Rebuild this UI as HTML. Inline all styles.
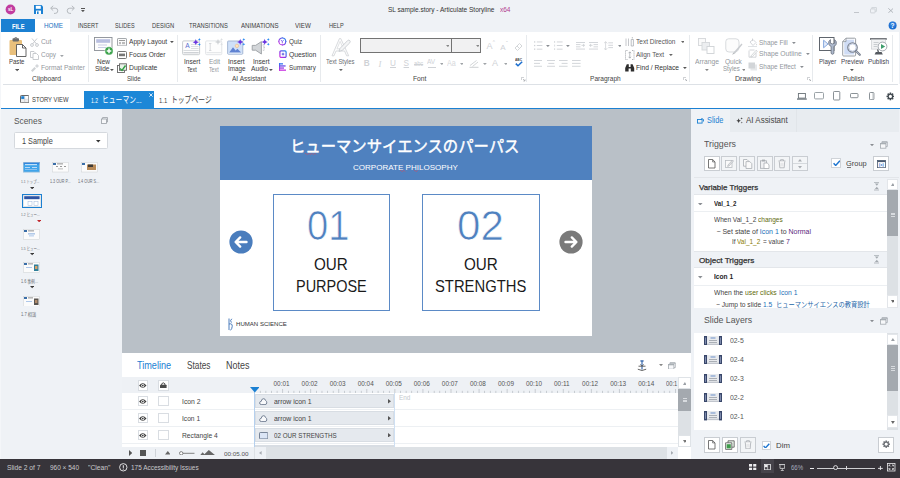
<!DOCTYPE html>
<html><head><meta charset="utf-8"><title>SL sample.story - Articulate Storyline</title>
<style>
html,body{margin:0;padding:0;}
body{width:900px;height:478px;overflow:hidden;position:relative;background:#eff2f6;font-family:"Liberation Sans","Noto Sans CJK JP",sans-serif;}
div,svg,span.t{position:absolute;}
span.t{white-space:nowrap;display:block;transform-origin:0 50%;}
</style></head><body>
<div style="left:0px;top:0px;width:900px;height:19px;background:#eff2f6;"></div>
<div style="left:0px;top:19px;width:900px;height:13px;background:#eff2f6;"></div>
<div style="left:1px;top:32px;width:898px;height:52px;background:#fff;"></div>
<div style="left:1px;top:84px;width:899px;height:1px;background:#fff;"></div>
<div style="left:3px;top:84px;width:895px;height:1px;background:#dde1e6;"></div>
<div style="left:1px;top:85px;width:899px;height:23px;background:#fff;"></div>
<div style="left:1px;top:108px;width:899px;height:1px;background:#1b80d2;"></div>
<div style="left:122px;top:109px;width:569px;height:244px;background:#b9c0c7;"></div>
<div style="left:0px;top:109px;width:122px;height:350px;background:#eff2f6;"></div>
<div style="left:0px;top:32px;width:1px;height:427px;background:#f4f6f9;"></div>
<div style="left:691px;top:109px;width:209px;height:350px;background:#eff2f6;"></div>
<div style="left:122px;top:353px;width:569px;height:106px;background:#fff;"></div>
<div style="left:0px;top:459px;width:900px;height:19px;background:#37343a;"></div>
<svg style="left:5px;top:4px;" width="11" height="11" viewBox="0 0 11 11"><circle cx="5.5" cy="5.5" r="4.9" fill="#c13c9f"/></svg>
<span class="t" style="left:7.92px;top:7.00px;font-size:4.6px;line-height:6px;color:#fff;font-weight:bold;">sL</span>
<svg style="left:34px;top:5px;" width="9" height="9" viewBox="0 0 9 9"><path d="M0 0H7.5L9 1.5V9H0Z" fill="#1b80d2"/><rect x="1.8" y="0.8" width="5" height="3" fill="#fff"/><rect x="2" y="5.6" width="5" height="3.4" fill="#fff"/><rect x="3" y="6.4" width="1.6" height="2.6" fill="#1b80d2"/></svg>
<svg style="left:50px;top:5px;" width="9" height="9" viewBox="0 0 9 9"><path d="M1 3.2H5.2A2.6 2.6 0 0 1 5.2 8.4H4" fill="none" stroke="#b5b9be" stroke-width="1"/><path d="M3.2 0.8L0.6 3.2L3.2 5.6" fill="none" stroke="#b5b9be" stroke-width="1"/></svg>
<svg style="left:66px;top:5px;" width="9" height="9" viewBox="0 0 9 9"><path d="M8 3.2H3.8A2.6 2.6 0 0 0 3.8 8.4H5" fill="none" stroke="#b5b9be" stroke-width="1"/><path d="M5.8 0.8L8.4 3.2L5.8 5.6" fill="none" stroke="#b5b9be" stroke-width="1"/></svg>
<div style="left:80.6px;top:7.8px;width:4.4px;height:0.8px;background:#555;"></div>
<svg style="left:80.9px;top:9.6px;" width="3.8" height="2.2" viewBox="0 0 3.8 2.2"><path d="M0 0H3.8L1.9 2.2Z" fill="#555"/></svg>
<span class="t" style="left:388.00px;top:5.40px;font-size:7.2px;line-height:10px;color:#333;transform:scaleX(0.9081);">SL sample.story -  Articulate Storyline</span>
<span class="t" style="left:500.00px;top:5.40px;font-size:7.2px;line-height:10px;color:#b23a8e;transform:scaleX(0.9046);">x64</span>
<div style="left:853.9px;top:12.1px;width:5px;height:0.9px;background:#c2c6cb;"></div>
<svg style="left:870px;top:7.4px;" width="7" height="6.6" viewBox="0 0 7 6.6"><rect x="0.5" y="1.9" width="4.6" height="4" rx="0.6" fill="none" stroke="#cdd1d6" stroke-width="0.9"/><path d="M1.8 1.8V0.6H6.4V4.4H5.2" fill="none" stroke="#cdd1d6" stroke-width="0.9"/></svg>
<svg style="left:887.6px;top:8.1px;" width="5.6" height="5.2" viewBox="0 0 5.6 5.2"><path d="M0.3 0.3L5.3 4.9M5.3 0.3L0.3 4.9" stroke="#a4aab0" stroke-width="0.8"/></svg>
<svg style="left:888px;top:20.5px;" width="9" height="9" viewBox="0 0 9 9"><circle cx="4.6" cy="4.5" r="4" fill="#1c6fd0"/><circle cx="4.6" cy="3.6" r="3" fill="#3f8de6" opacity="0.5"/></svg>
<span class="t" style="left:890.51px;top:21.10px;font-size:6.5px;line-height:9px;color:#fff;font-weight:bold;">?</span>
<div style="left:1px;top:19px;width:34px;height:13px;background:#1b80d2;"></div>
<span class="t" style="left:11.75px;top:21.70px;font-size:6.6px;line-height:9px;color:#fff;transform:scaleX(0.8742);font-weight:bold;">FILE</span>
<div style="left:35px;top:19px;width:34.7px;height:14px;background:#fff;"></div>
<span class="t" style="left:43.50px;top:21.20px;font-size:6.8px;line-height:10px;color:#1b6fc0;transform:scaleX(0.9314);">HOME</span>
<span class="t" style="left:78.40px;top:21.20px;font-size:6.8px;line-height:10px;color:#3c3c3c;transform:scaleX(0.8262);">INSERT</span>
<span class="t" style="left:114.80px;top:21.20px;font-size:6.8px;line-height:10px;color:#3c3c3c;transform:scaleX(0.8104);">SLIDES</span>
<span class="t" style="left:151.80px;top:21.20px;font-size:6.8px;line-height:10px;color:#3c3c3c;transform:scaleX(0.8516);">DESIGN</span>
<span class="t" style="left:188.70px;top:21.20px;font-size:6.8px;line-height:10px;color:#3c3c3c;transform:scaleX(0.8488);">TRANSITIONS</span>
<span class="t" style="left:241.30px;top:21.20px;font-size:6.8px;line-height:10px;color:#3c3c3c;transform:scaleX(0.8981);">ANIMATIONS</span>
<span class="t" style="left:295.40px;top:21.20px;font-size:6.8px;line-height:10px;color:#3c3c3c;transform:scaleX(0.9092);">VIEW</span>
<span class="t" style="left:329.30px;top:21.20px;font-size:6.8px;line-height:10px;color:#3c3c3c;transform:scaleX(0.8276);">HELP</span>
<div style="left:88px;top:35px;width:1px;height:47px;background:#e7eaed;"></div>
<div style="left:177px;top:35px;width:1px;height:47px;background:#e7eaed;"></div>
<div style="left:319.5px;top:35px;width:1px;height:47px;background:#e7eaed;"></div>
<div style="left:526px;top:35px;width:1px;height:47px;background:#e7eaed;"></div>
<div style="left:689px;top:35px;width:1px;height:47px;background:#e7eaed;"></div>
<div style="left:812px;top:35px;width:1px;height:47px;background:#e7eaed;"></div>
<div style="left:892px;top:35px;width:1px;height:47px;background:#e7eaed;"></div>
<span class="t" style="left:32.00px;top:74.00px;font-size:7px;line-height:10px;color:#444;transform:scaleX(0.9678);">Clipboard</span>
<span class="t" style="left:127.00px;top:74.00px;font-size:7px;line-height:10px;color:#444;transform:scaleX(0.8800);">Slide</span>
<span class="t" style="left:232.00px;top:74.00px;font-size:7px;line-height:10px;color:#444;transform:scaleX(0.9334);">AI Assistant</span>
<span class="t" style="left:413.40px;top:74.00px;font-size:7px;line-height:10px;color:#444;transform:scaleX(0.9565);">Font</span>
<span class="t" style="left:589.70px;top:74.00px;font-size:7px;line-height:10px;color:#444;transform:scaleX(0.9391);">Paragraph</span>
<span class="t" style="left:735.30px;top:74.00px;font-size:7px;line-height:10px;color:#444;transform:scaleX(1.0086);">Drawing</span>
<span class="t" style="left:842.80px;top:74.00px;font-size:7px;line-height:10px;color:#444;transform:scaleX(0.9320);">Publish</span>
<svg style="left:9px;top:37px;" width="18" height="20" viewBox="0 0 18 20"><rect x="0.5" y="3" width="12.5" height="15" rx="1" fill="#e9c07c"/>
<rect x="3.5" y="1.2" width="6.5" height="3.2" rx="0.8" fill="#6b6b6b"/><circle cx="6.8" cy="1.6" r="1.2" fill="none" stroke="#6b6b6b" stroke-width="0.8"/>
<path d="M7.5 7.5H13.5L17 11V19.5H7.5Z" fill="#fff" stroke="#555" stroke-width="0.9"/><path d="M13.5 7.5V11H17" fill="none" stroke="#555" stroke-width="0.9"/></svg>
<span class="t" style="left:9.00px;top:56.90px;font-size:7px;line-height:10px;color:#3a3a3a;transform:scaleX(0.8603);">Paste</span>
<svg style="left:14.84px;top:69.42px;" width="4.32" height="2.3760000000000003" viewBox="0 0 4.32 2.3760000000000003"><path d="M0 0H4.32L2.16 2.3760000000000003Z" fill="#555"/></svg>
<svg style="left:30px;top:37.5px;" width="9" height="9" viewBox="0 0 9 9"><path d="M2 0.5L6.5 6M7 0.5L2.5 6" stroke="#c2c5c9" stroke-width="0.9" fill="none"/><circle cx="2" cy="7" r="1.4" fill="none" stroke="#c2c5c9" stroke-width="0.9"/><circle cx="7" cy="7" r="1.4" fill="none" stroke="#c2c5c9" stroke-width="0.9"/></svg>
<span class="t" style="left:41.00px;top:37.40px;font-size:7px;line-height:10px;color:#92979d;transform:scaleX(0.9638);">Cut</span>
<svg style="left:30px;top:50.5px;" width="9" height="9" viewBox="0 0 9 9"><path d="M0.5 0.5H4L5.5 2V6.5H0.5Z" fill="#fff" stroke="#c2c5c9" stroke-width="0.9"/><path d="M3 2.5H6.5L8.5 4.5V8.5H3Z" fill="#fff" stroke="#c2c5c9" stroke-width="0.9"/></svg>
<span class="t" style="left:41.00px;top:50.40px;font-size:7px;line-height:10px;color:#92979d;transform:scaleX(0.9178);">Copy</span>
<svg style="left:60.08px;top:54.54px;" width="3.84" height="2.112" viewBox="0 0 3.84 2.112"><path d="M0 0H3.84L1.92 2.112Z" fill="#a0a4a8"/></svg>
<svg style="left:30px;top:63px;" width="9" height="9" viewBox="0 0 9 9"><path d="M1 7.5L4.5 4L6 5.5L2.5 9Z" fill="#cfd2d5"/><path d="M5 3L7 1L9 3L7 5Z" fill="#d5d8db"/></svg>
<span class="t" style="left:41.00px;top:62.70px;font-size:7px;line-height:10px;color:#92979d;transform:scaleX(0.9504);">Format Painter</span>
<svg style="left:94px;top:37px;" width="20" height="18" viewBox="0 0 20 18"><rect x="0.5" y="0.5" width="17.5" height="13" fill="#fdfdfd" stroke="#8a8f96" stroke-width="0.9"/>
<rect x="2.2" y="2.2" width="14" height="3.6" fill="#b9bfe0"/><rect x="4" y="7.5" width="9" height="1" fill="#c9cde6"/><rect x="4" y="10" width="9" height="1" fill="#c9cde6"/>
<circle cx="15" cy="13.9" r="4.1" fill="#3aa24a" stroke="#fff" stroke-width="0.5"/><path d="M12.7 13.9H17.3M15 11.6V16.2" stroke="#fff" stroke-width="1.5"/></svg>
<span class="t" style="left:97.45px;top:57.20px;font-size:7.2px;line-height:10px;color:#3a3a3a;transform:scaleX(0.8957);">New</span>
<span class="t" style="left:95.20px;top:64.20px;font-size:7.2px;line-height:10px;color:#3a3a3a;transform:scaleX(0.9058);">Slide</span>
<svg style="left:110.3px;top:69.35px;" width="3.8" height="2.09" viewBox="0 0 3.8 2.09"><path d="M0 0H3.8L1.9 2.09Z" fill="#555"/></svg>
<svg style="left:117px;top:37.6px;" width="10" height="8.4" viewBox="0 0 10 8.4"><rect x="0.5" y="0.5" width="9" height="7.4" rx="0.6" fill="#fbfbfb" stroke="#9a9ea3" stroke-width="0.9"/><rect x="2" y="2" width="6" height="1" fill="#999"/><rect x="2" y="4" width="2" height="2.2" fill="#bbb"/><rect x="5" y="4" width="3" height="2.2" fill="#bbb"/></svg>
<span class="t" style="left:128.60px;top:36.90px;font-size:7px;line-height:10px;color:#3a3a3a;transform:scaleX(0.9438);">Apply Layout</span>
<svg style="left:170.48000000000002px;top:41.04px;" width="3.84" height="2.112" viewBox="0 0 3.84 2.112"><path d="M0 0H3.84L1.92 2.112Z" fill="#555"/></svg>
<svg style="left:117px;top:50.5px;" width="10" height="8" viewBox="0 0 10 8"><rect x="0.5" y="0.5" width="9" height="7" rx="1" fill="#fff" stroke="#666" stroke-width="0.9"/><rect x="2" y="2.6" width="6" height="2.6" fill="#777"/></svg>
<span class="t" style="left:128.60px;top:49.70px;font-size:7px;line-height:10px;color:#3a3a3a;transform:scaleX(0.9357);">Focus Order</span>
<svg style="left:117px;top:62.5px;" width="10" height="10" viewBox="0 0 10 10"><rect x="0.5" y="2.5" width="7" height="7" fill="#fff" stroke="#666" stroke-width="0.9"/><rect x="2.5" y="0.8" width="7" height="6.5" fill="#e8f2e8" stroke="#666" stroke-width="0.9"/><path d="M3 5.5L5 7.5L8.5 2.5" stroke="#2f9e44" stroke-width="1.4" fill="none"/></svg>
<span class="t" style="left:128.60px;top:62.70px;font-size:7px;line-height:10px;color:#3a3a3a;transform:scaleX(0.9731);">Duplicate</span>
<svg style="left:182px;top:37px;" width="22" height="19" viewBox="0 0 22 19"><rect x="0.6" y="3.9" width="17" height="13.8" rx="1.2" fill="#fdfdfd" stroke="#c3c7cb" stroke-width="0.9"/><rect x="1.5" y="13" width="15.2" height="1" fill="#d9dcdf"/><rect x="1.5" y="15" width="15.2" height="1.4" fill="#cfd2d6"/><rect x="9" y="7.2" width="7.5" height="0.8" fill="#d5d8db"/><rect x="9" y="9.2" width="7.5" height="0.8" fill="#d5d8db"/><rect x="9" y="11.2" width="7.5" height="0.8" fill="#d5d8db"/><path transform="translate(13.8 5.2) scale(1.05)" d="M0 -3C0.45 -1 1 -0.45 3 0C1 0.45 0.45 1 0 3C-0.45 1 -1 0.45 -3 0C-1 -0.45 -0.45 -1 0 -3Z" fill="#6a35e0"/><path transform="translate(17.400000000000002 2.6) scale(0.5)" d="M0 -3C0.45 -1 1 -0.45 3 0C1 0.45 0.45 1 0 3C-0.45 1 -1 0.45 -3 0C-1 -0.45 -0.45 -1 0 -3Z" fill="#2a8af0"/><path transform="translate(17.400000000000002 7.4) scale(0.5)" d="M0 -3C0.45 -1 1 -0.45 3 0C1 0.45 0.45 1 0 3C-0.45 1 -1 0.45 -3 0C-1 -0.45 -0.45 -1 0 -3Z" fill="#2a8af0"/></svg>
<span class="t" style="left:185.20px;top:41.30px;font-size:6.6px;line-height:9px;color:#5a6fd0;">A</span>
<span class="t" style="left:183.60px;top:56.90px;font-size:7px;line-height:10px;color:#3a3a3a;transform:scaleX(0.9310);">Insert</span>
<span class="t" style="left:186.90px;top:64.50px;font-size:6.7px;line-height:9px;color:#3a3a3a;transform:scaleX(0.7829);">Text</span>
<svg style="left:205px;top:37px;" width="22" height="19" viewBox="0 0 22 19"><rect x="0.6" y="3.9" width="16.2" height="13.8" rx="1.2" fill="#fdfdfd" stroke="#dfe2e5" stroke-width="0.9"/><rect x="1.5" y="15" width="14.4" height="1.2" fill="#e6e8ea"/><path d="M5.2 6.5V13.5M4 6.5H6.4M4 13.5H6.4" stroke="#cfd2d5" stroke-width="0.8" fill="none"/><path transform="translate(13 5) scale(1.05)" d="M0 -3C0.45 -1 1 -0.45 3 0C1 0.45 0.45 1 0 3C-0.45 1 -1 0.45 -3 0C-1 -0.45 -0.45 -1 0 -3Z" fill="#d0d3d6"/><path transform="translate(16.6 2.4) scale(0.5)" d="M0 -3C0.45 -1 1 -0.45 3 0C1 0.45 0.45 1 0 3C-0.45 1 -1 0.45 -3 0C-1 -0.45 -0.45 -1 0 -3Z" fill="#dcdfe2"/><path transform="translate(16.6 7.2) scale(0.5)" d="M0 -3C0.45 -1 1 -0.45 3 0C1 0.45 0.45 1 0 3C-0.45 1 -1 0.45 -3 0C-1 -0.45 -0.45 -1 0 -3Z" fill="#dcdfe2"/></svg>
<span class="t" style="left:208.90px;top:56.90px;font-size:7px;line-height:10px;color:#92979d;transform:scaleX(0.9201);">Edit</span>
<span class="t" style="left:209.10px;top:64.50px;font-size:6.7px;line-height:9px;color:#92979d;transform:scaleX(0.7829);">Text</span>
<svg style="left:227px;top:37px;" width="22" height="19" viewBox="0 0 22 19"><rect x="0.6" y="4" width="15.2" height="13.2" rx="0.8" fill="#cfe0f8" stroke="#9fb2d0" stroke-width="0.9"/><path d="M2 15.8L6 10.2L8.6 13.6L10.4 11.8L14.4 15.8Z" fill="#5f82d2"/><circle cx="9.9" cy="8.9" r="1.7" fill="#fbe3c0" stroke="#f0b070" stroke-width="0.5"/><rect x="1.4" y="15.6" width="13.6" height="1" fill="#e8eef8"/><path transform="translate(13.2 5) scale(1.05)" d="M0 -3C0.45 -1 1 -0.45 3 0C1 0.45 0.45 1 0 3C-0.45 1 -1 0.45 -3 0C-1 -0.45 -0.45 -1 0 -3Z" fill="#6a35e0"/><path transform="translate(16.8 2.4) scale(0.5)" d="M0 -3C0.45 -1 1 -0.45 3 0C1 0.45 0.45 1 0 3C-0.45 1 -1 0.45 -3 0C-1 -0.45 -0.45 -1 0 -3Z" fill="#2a8af0"/><path transform="translate(16.8 7.2) scale(0.5)" d="M0 -3C0.45 -1 1 -0.45 3 0C1 0.45 0.45 1 0 3C-0.45 1 -1 0.45 -3 0C-1 -0.45 -0.45 -1 0 -3Z" fill="#2a8af0"/></svg>
<span class="t" style="left:228.00px;top:56.90px;font-size:7px;line-height:10px;color:#3a3a3a;transform:scaleX(0.9538);">Insert</span>
<span class="t" style="left:227.70px;top:64.20px;font-size:7px;line-height:10px;color:#3a3a3a;transform:scaleX(0.8994);">Image</span>
<svg style="left:251px;top:37px;" width="22" height="19" viewBox="0 0 22 19"><path d="M1.2 8.4H4.6L10.4 4.6V17L4.6 13.2H1.2Z" fill="#d3d6d9" stroke="#9a9ea3" stroke-width="0.9"/><path d="M12 7.6Q14.4 10.8 12 14" fill="none" stroke="#c5c8cc" stroke-width="1.6" stroke-dasharray="0.8 0.6"/><path transform="translate(13.7 5) scale(1.05)" d="M0 -3C0.45 -1 1 -0.45 3 0C1 0.45 0.45 1 0 3C-0.45 1 -1 0.45 -3 0C-1 -0.45 -0.45 -1 0 -3Z" fill="#6a35e0"/><path transform="translate(17.3 2.4) scale(0.5)" d="M0 -3C0.45 -1 1 -0.45 3 0C1 0.45 0.45 1 0 3C-0.45 1 -1 0.45 -3 0C-1 -0.45 -0.45 -1 0 -3Z" fill="#2a8af0"/><path transform="translate(17.3 7.2) scale(0.5)" d="M0 -3C0.45 -1 1 -0.45 3 0C1 0.45 0.45 1 0 3C-0.45 1 -1 0.45 -3 0C-1 -0.45 -0.45 -1 0 -3Z" fill="#2a8af0"/></svg>
<span class="t" style="left:252.70px;top:56.90px;font-size:7px;line-height:10px;color:#3a3a3a;transform:scaleX(0.9481);">Insert</span>
<span class="t" style="left:250.80px;top:64.00px;font-size:7px;line-height:10px;color:#3a3a3a;transform:scaleX(0.9494);">Audio</span>
<svg style="left:268.90000000000003px;top:69.25px;" width="3.8" height="2.09" viewBox="0 0 3.8 2.09"><path d="M0 0H3.8L1.9 2.09Z" fill="#555"/></svg>
<svg width="0" height="0" style="left:0;top:0"><defs><linearGradient id="gp" x1="1" y1="0" x2="0" y2="1"><stop offset="0" stop-color="#1e8cf0"/><stop offset="0.55" stop-color="#7a3fe6"/><stop offset="1" stop-color="#d32fe0"/></linearGradient><linearGradient id="gv" x1="0" y1="0" x2="0" y2="1"><stop offset="0" stop-color="#2a7cf0"/><stop offset="1" stop-color="#d32fe0"/></linearGradient></defs></svg>
<svg style="left:278px;top:37px;" width="9" height="9" viewBox="0 0 9 9"><circle cx="4.3" cy="4.4" r="3.4" fill="#fff" stroke="url(#gp)" stroke-width="1.1"/><path d="M2.8 2.8L4.3 4.6L5.8 2.8M4.3 4.6V6.4" stroke="url(#gp)" stroke-width="0.8" fill="none"/><path d="M4.3 0V0.8M4.3 8V8.8M0 4.4H0.7M7.9 4.4H8.6" stroke="url(#gp)" stroke-width="0.8"/></svg>
<span class="t" style="left:288.90px;top:37.00px;font-size:7px;line-height:10px;color:#3a3a3a;transform:scaleX(0.9101);">Quiz</span>
<svg style="left:278.5px;top:50.3px;" width="8" height="8.4" viewBox="0 0 8 8.4"><rect x="0.9" y="0.9" width="6.2" height="6.4" rx="1.1" fill="#fff" stroke="url(#gp)" stroke-width="1.2"/><path d="M2.7 4.1H5.3M4 2.8V5.4" stroke="#4a4fe0" stroke-width="0.9"/></svg>
<span class="t" style="left:288.90px;top:49.80px;font-size:7px;line-height:10px;color:#3a3a3a;transform:scaleX(0.9707);">Question</span>
<svg style="left:278.8px;top:63.2px;" width="8" height="8" viewBox="0 0 8 8"><rect x="0" y="0" width="1.1" height="7.8" fill="url(#gv)"/><rect x="0" y="0.2" width="4" height="1.3" fill="#3a78f0"/><rect x="0" y="2.3" width="6.6" height="1.3" fill="#6a4fe8"/><rect x="0" y="4.4" width="5" height="1.3" fill="#9a3fe4"/><rect x="0" y="6.5" width="7" height="1.3" fill="#c832e0"/></svg>
<span class="t" style="left:288.90px;top:62.80px;font-size:7px;line-height:10px;color:#3a3a3a;transform:scaleX(0.8948);">Summary</span>
<svg style="left:331px;top:37.5px;" width="22" height="19" viewBox="0 0 22 19"><path d="M1 17.8L8.4 0.6H9.8L17.7 17.8H15.6L13.6 13H5L3 17.8Z" fill="#fdfdfd" stroke="#cfd2d6" stroke-width="0.8"/><path d="M6 10.8H12.4L9.1 3.4Z" fill="#fff" stroke="#d5d8db" stroke-width="0.7"/><path d="M8 13.4L9 10.4L16.6 2.6Q17.8 1.6 18.8 2.6Q19.7 3.6 18.8 4.8L11.2 12.4Z" fill="#f4f5f6" stroke="#c3c7cb" stroke-width="0.8"/></svg>
<span class="t" style="left:326.10px;top:57.00px;font-size:7px;line-height:10px;color:#6a6e73;transform:scaleX(0.8376);">Text Styles</span>
<svg style="left:339.08px;top:69.34px;" width="3.84" height="2.112" viewBox="0 0 3.84 2.112"><path d="M0 0H3.84L1.92 2.112Z" fill="#666"/></svg>
<div style="left:360px;top:38.4px;width:91.6px;height:14.4px;background:#f1f1f2;border:1px solid #737373;box-sizing:border-box;"></div>
<div style="left:450.6px;top:38.4px;width:30.6px;height:14.4px;background:#f1f1f2;border:1px solid #737373;box-sizing:border-box;"></div>
<svg style="left:445.70000000000005px;top:44.849999999999994px;" width="3.8" height="2.09" viewBox="0 0 3.8 2.09"><path d="M0 0H3.8L1.9 2.09Z" fill="#888"/></svg>
<svg style="left:475.5px;top:44.849999999999994px;" width="3.8" height="2.09" viewBox="0 0 3.8 2.09"><path d="M0 0H3.8L1.9 2.09Z" fill="#888"/></svg>
<span class="t" style="left:363.74px;top:58.10px;font-size:8.2px;line-height:11px;color:#cfd2d6;font-weight:bold;">B</span>
<span class="t" style="left:378.51px;top:57.60px;font-size:8.6px;line-height:12px;color:#cfd2d6;font-style:italic;font-family:'Liberation Serif',serif;">I</span>
<span class="t" style="left:390.04px;top:58.10px;font-size:8.2px;line-height:11px;color:#cfd2d6;text-decoration:underline;">U</span>
<span class="t" style="left:403.57px;top:58.10px;font-size:8.2px;line-height:11px;color:#cfd2d6;text-decoration:underline;">S</span>
<span class="t" style="left:413.80px;top:58.80px;font-size:7px;line-height:10px;color:#cfd2d6;transform:scaleX(0.8151);text-decoration:line-through;">abc</span>
<span class="t" style="left:427.30px;top:57.40px;font-size:7.2px;line-height:10px;color:#cfd2d6;transform:scaleX(0.9059);">AV</span>
<div style="left:427.5px;top:66.6px;width:8.5px;height:0.8px;background:#cfd2d6;"></div>
<svg style="left:439.70000000000005px;top:62.55px;" width="3.8" height="2.09" viewBox="0 0 3.8 2.09"><path d="M0 0H3.8L1.9 2.09Z" fill="#a0a4a8"/></svg>
<span class="t" style="left:447.00px;top:57.40px;font-size:8.4px;line-height:12px;color:#d6d8db;transform:scaleX(0.8566);">Aa</span>
<svg style="left:459.70000000000005px;top:62.55px;" width="3.8" height="2.09" viewBox="0 0 3.8 2.09"><path d="M0 0H3.8L1.9 2.09Z" fill="#a0a4a8"/></svg>
<svg style="left:469px;top:58.5px;" width="10" height="9" viewBox="0 0 10 9"><path d="M1 6.5L7.5 1.5M3.5 7.5L9 3" stroke="#cdd0d3" stroke-width="0.9"/><path d="M0.5 8.3H9.5" stroke="#cdd0d3" stroke-width="1"/></svg>
<svg style="left:483.3px;top:62.55px;" width="3.8" height="2.09" viewBox="0 0 3.8 2.09"><path d="M0 0H3.8L1.9 2.09Z" fill="#a0a4a8"/></svg>
<span class="t" style="left:492.00px;top:56.70px;font-size:9px;line-height:13px;color:#cfd2d6;">A</span>
<svg style="left:503.6px;top:62.55px;" width="3.8" height="2.09" viewBox="0 0 3.8 2.09"><path d="M0 0H3.8L1.9 2.09Z" fill="#a0a4a8"/></svg>
<span class="t" style="left:514.80px;top:57.90px;font-size:3.6px;line-height:5px;color:#444;transform:scaleX(0.8976);font-weight:bold;">ABC</span>
<svg style="left:514.5px;top:61px;" width="8" height="6" viewBox="0 0 8 6"><path d="M0.8 2.6L3 4.8L7.2 0.8" fill="none" stroke="#1b6fd0" stroke-width="1.5"/></svg>
<span class="t" style="left:486.60px;top:40.10px;font-size:9px;line-height:13px;color:#cfd2d6;">A</span>
<span class="t" style="left:492.74px;top:39.80px;font-size:4.5px;line-height:6px;color:#cfd2d6;">^</span>
<span class="t" style="left:500.33px;top:41.50px;font-size:8px;line-height:11px;color:#cfd2d6;">A</span>
<span class="t" style="left:505.88px;top:39.20px;font-size:5.5px;line-height:8px;color:#cfd2d6;">ˇ</span>
<svg style="left:514px;top:41.5px;" width="9" height="9" viewBox="0 0 9 9"><path d="M1 6L5.5 1.5L8 4L3.5 8.5Z" fill="none" stroke="#cfd2d5" stroke-width="0.9"/><path d="M3 4L5.5 6.5" stroke="#cfd2d5" stroke-width="0.9"/></svg>
<svg style="left:521px;top:77px;" width="4.5" height="4.5" viewBox="0 0 4.5 4.5"><path d="M0.4 3V0.4H3" fill="none" stroke="#b5b8bc" stroke-width="0.7"/><path d="M2 2L4 4M4 2.3V4H2.3" fill="none" stroke="#a5a8ac" stroke-width="0.7"/></svg>
<svg style="left:533.6px;top:41px;" width="9" height="9" viewBox="0 0 9 9"><rect x="0" y="0.3" width="1.3" height="1.3" fill="#cfd2d6"/><rect x="2.8" y="0.5" width="5.6" height="0.9" fill="#cfd2d6"/><rect x="0" y="3.9" width="1.3" height="1.3" fill="#cfd2d6"/><rect x="2.8" y="4.1" width="5.6" height="0.9" fill="#cfd2d6"/><rect x="0" y="7.5" width="1.3" height="1.3" fill="#cfd2d6"/><rect x="2.8" y="7.7" width="5.6" height="0.9" fill="#cfd2d6"/></svg>
<svg style="left:546.0px;top:44.949999999999996px;" width="3.8" height="2.09" viewBox="0 0 3.8 2.09"><path d="M0 0H3.8L1.9 2.09Z" fill="#8a8e93"/></svg>
<svg style="left:553.5px;top:41px;" width="9" height="9" viewBox="0 0 9 9"><rect x="0.3" y="0.0" width="0.8" height="1.9" fill="#cfd2d6"/><rect x="2.8" y="0.5" width="5.8" height="0.9" fill="#cfd2d6"/><rect x="0.3" y="3.6" width="0.8" height="1.9" fill="#cfd2d6"/><rect x="2.8" y="4.1" width="5.8" height="0.9" fill="#cfd2d6"/><rect x="0.3" y="7.2" width="0.8" height="1.9" fill="#cfd2d6"/><rect x="2.8" y="7.7" width="5.8" height="0.9" fill="#cfd2d6"/></svg>
<svg style="left:566.1px;top:44.949999999999996px;" width="3.8" height="2.09" viewBox="0 0 3.8 2.09"><path d="M0 0H3.8L1.9 2.09Z" fill="#8a8e93"/></svg>
<svg style="left:575.9px;top:42px;" width="10" height="8" viewBox="0 0 10 8"><rect x="0" y="0.0" width="9" height="0.9" fill="#cfd2d6"/><rect x="0" y="2.2" width="4.5" height="0.9" fill="#cfd2d6"/><rect x="0" y="4.4" width="4.5" height="0.9" fill="#cfd2d6"/><rect x="0" y="6.6000000000000005" width="9" height="0.9" fill="#cfd2d6"/><path d="M5.5 3.3H9M7.6 1.9V4.8" stroke="#cfd2d6" stroke-width="0.9"/></svg>
<svg style="left:589.2px;top:42px;" width="10" height="8" viewBox="0 0 10 8"><rect x="0" y="0.0" width="9" height="0.9" fill="#cfd2d6"/><rect x="4.5" y="2.2" width="4.5" height="0.9" fill="#cfd2d6"/><rect x="4.5" y="4.4" width="4.5" height="0.9" fill="#cfd2d6"/><rect x="0" y="6.6000000000000005" width="9" height="0.9" fill="#cfd2d6"/><path d="M0 3.3H3.6M1.6 1.9V4.8" stroke="#cfd2d6" stroke-width="0.9"/></svg>
<svg style="left:604.3px;top:41px;" width="10" height="10" viewBox="0 0 10 10"><path d="M1.6 0.8V8.8M0 2.4L1.6 0.6L3.2 2.4M0 7.2L1.6 9L3.2 7.2" fill="none" stroke="#cfd2d6" stroke-width="0.8"/><rect x="4.3" y="1.4" width="4.7" height="0.9" fill="#cfd2d6"/><rect x="4.3" y="3.8" width="4.7" height="0.9" fill="#cfd2d6"/><rect x="4.3" y="6.199999999999999" width="4.7" height="0.9" fill="#cfd2d6"/></svg>
<svg style="left:617.6px;top:44.949999999999996px;" width="3.8" height="2.09" viewBox="0 0 3.8 2.09"><path d="M0 0H3.8L1.9 2.09Z" fill="#8a8e93"/></svg>
<svg style="left:533.6px;top:60px;" width="8.5" height="8.7" viewBox="0 0 8.5 8.7"><rect x="0" y="0.0" width="8.5" height="0.9" fill="#cfd2d6"/><rect x="0" y="2.9" width="6" height="0.9" fill="#cfd2d6"/><rect x="0" y="5.8" width="8.5" height="0.9" fill="#cfd2d6"/></svg>
<svg style="left:546.7px;top:60px;" width="8.6" height="9" viewBox="0 0 8.6 9"><rect x="0.0" y="0.0" width="8.6" height="0.9" fill="#cfd2d6"/><rect x="1.2999999999999998" y="2.9" width="6" height="0.9" fill="#cfd2d6"/><rect x="0.0" y="5.8" width="8.6" height="0.9" fill="#cfd2d6"/></svg>
<svg style="left:559.3px;top:60px;" width="8.6" height="8.7" viewBox="0 0 8.6 8.7"><rect x="0.0" y="0.0" width="8.6" height="0.9" fill="#cfd2d6"/><rect x="2.5999999999999996" y="2.9" width="6" height="0.9" fill="#cfd2d6"/><rect x="0.0" y="5.8" width="8.6" height="0.9" fill="#cfd2d6"/></svg>
<svg style="left:572.4px;top:60px;" width="8.6" height="8.7" viewBox="0 0 8.6 8.7"><rect x="0" y="0.0" width="8.6" height="0.9" fill="#cfd2d6"/><rect x="0" y="2.9" width="8.6" height="0.9" fill="#cfd2d6"/><rect x="0" y="5.8" width="8.6" height="0.9" fill="#cfd2d6"/></svg>
<svg style="left:625px;top:37px;" width="10" height="10" viewBox="0 0 10 10"><path d="M1 1.5V9M3.5 1.5V9" stroke="#bfc2c6" stroke-width="0.9"/><path d="M6.2 9V2.5H8.4V9Z" fill="none" stroke="#a9adb2" stroke-width="0.8"/><path d="M7.3 0V1.5" stroke="#a9adb2" stroke-width="0.8"/></svg>
<span class="t" style="left:636.00px;top:36.90px;font-size:7px;line-height:10px;color:#555;transform:scaleX(0.9309);">Text Direction</span>
<svg style="left:680.6px;top:41.05px;" width="3.8" height="2.09" viewBox="0 0 3.8 2.09"><path d="M0 0H3.8L1.9 2.09Z" fill="#666"/></svg>
<svg style="left:625px;top:49.5px;" width="10" height="10" viewBox="0 0 10 10"><path d="M2.5 0.5H0.5V9.5H2.5M7 0.5H9V9.5H7" fill="none" stroke="#9a9ea3" stroke-width="0.8" stroke-dasharray="1.2 0.8"/><path d="M4.8 2V8M3.6 3.2L4.8 1.8L6 3.2M3.6 6.8L4.8 8.2L6 6.8" fill="none" stroke="#9a9ea3" stroke-width="0.7"/></svg>
<span class="t" style="left:636.00px;top:49.70px;font-size:7px;line-height:10px;color:#555;transform:scaleX(0.9316);">Align Text</span>
<svg style="left:668.9px;top:53.849999999999994px;" width="3.8" height="2.09" viewBox="0 0 3.8 2.09"><path d="M0 0H3.8L1.9 2.09Z" fill="#666"/></svg>
<svg style="left:625px;top:62.5px;" width="10" height="9" viewBox="0 0 10 9"><path d="M1.8 1.2H3.8V4H5.6V1.2H7.6L9.2 5V8.4H5.8V5.6H3.6V8.4H0.2V5Z" fill="#2e2e2e"/></svg>
<span class="t" style="left:636.00px;top:62.70px;font-size:7px;line-height:10px;color:#333;transform:scaleX(0.9526);">Find / Replace</span>
<svg style="left:682.9px;top:66.85px;" width="3.8" height="2.09" viewBox="0 0 3.8 2.09"><path d="M0 0H3.8L1.9 2.09Z" fill="#555"/></svg>
<svg style="left:682.8px;top:76.7px;" width="4.5" height="4.5" viewBox="0 0 4.5 4.5"><path d="M0.4 3V0.4H3" fill="none" stroke="#b5b8bc" stroke-width="0.7"/><path d="M2 2L4 4M4 2.3V4H2.3" fill="none" stroke="#a5a8ac" stroke-width="0.7"/></svg>
<svg style="left:698px;top:38px;" width="17" height="16" viewBox="0 0 17 16"><rect x="0.5" y="0.5" width="7" height="7" fill="#fafafa" stroke="#d4d7da" stroke-width="0.9"/><rect x="4" y="4.5" width="7.5" height="7.5" fill="#eceef0" stroke="#d4d7da" stroke-width="0.9"/><rect x="9" y="8.5" width="7" height="7" fill="#fff" stroke="#cfd2d6" stroke-width="0.9"/></svg>
<span class="t" style="left:694.70px;top:56.90px;font-size:7px;line-height:10px;color:#92979d;transform:scaleX(0.9637);">Arrange</span>
<svg style="left:704.88px;top:69.34px;" width="3.84" height="2.112" viewBox="0 0 3.84 2.112"><path d="M0 0H3.84L1.92 2.112Z" fill="#888"/></svg>
<svg style="left:725px;top:38px;" width="18" height="18" viewBox="0 0 18 18"><path d="M3.5 0.8H11Q14 0.8 14 4V9Q14 14 9 14H4Q0.8 14 0.8 11V3.5Q0.8 0.8 3.5 0.8Z" fill="#fcfcfc" stroke="#d4d7da" stroke-width="0.9"/><path d="M8.5 14.5L16.5 5.5L17.5 6.5L10 15.5Z" fill="#c9ccd0"/><path d="M7 16.8L8.6 14.4L10 15.6Z" fill="#b5b8bc"/></svg>
<span class="t" style="left:724.50px;top:56.90px;font-size:7px;line-height:10px;color:#92979d;transform:scaleX(0.9388);">Quick</span>
<span class="t" style="left:723.40px;top:64.40px;font-size:7px;line-height:10px;color:#92979d;transform:scaleX(0.8813);">Styles</span>
<svg style="left:741.5px;top:69.25px;" width="3.8" height="2.09" viewBox="0 0 3.8 2.09"><path d="M0 0H3.8L1.9 2.09Z" fill="#888"/></svg>
<svg style="left:748px;top:37.5px;" width="10" height="9" viewBox="0 0 10 9"><path d="M2 4L5 1.5L8 4.5L5 7.5Z" fill="#fff" stroke="#c9ccd0" stroke-width="0.8"/><path d="M4.5 0.5V3" stroke="#c9ccd0" stroke-width="0.8"/><path d="M8.6 5.5Q9.6 7 8.6 7.6Q7.6 7 8.6 5.5Z" fill="#c9ccd0"/><rect x="0" y="8" width="9" height="0.9" fill="#dcdfe2"/></svg>
<span class="t" style="left:759.30px;top:37.50px;font-size:7px;line-height:10px;color:#92979d;transform:scaleX(0.9219);">Shape Fill</span>
<svg style="left:792.4px;top:41.65px;" width="3.8" height="2.09" viewBox="0 0 3.8 2.09"><path d="M0 0H3.8L1.9 2.09Z" fill="#8a8e93"/></svg>
<svg style="left:748px;top:49px;" width="10" height="9" viewBox="0 0 10 9"><path d="M1.5 1H6.5" stroke="#c9ccd0" stroke-width="0.8"/><path d="M1 1.5V8.2H8V4" fill="none" stroke="#c9ccd0" stroke-width="0.8"/><path d="M3.2 6.8L8.2 1.2L9.3 2.2L4.4 7.6L2.8 8Z" fill="#fff" stroke="#c2c5c9" stroke-width="0.7"/></svg>
<span class="t" style="left:759.30px;top:49.20px;font-size:7px;line-height:10px;color:#92979d;transform:scaleX(0.9623);">Shape Outline</span>
<svg style="left:806.4px;top:53.349999999999994px;" width="3.8" height="2.09" viewBox="0 0 3.8 2.09"><path d="M0 0H3.8L1.9 2.09Z" fill="#8a8e93"/></svg>
<svg style="left:748px;top:61.5px;" width="10" height="9" viewBox="0 0 10 9"><rect x="2.5" y="2.5" width="6.5" height="6" fill="#e6e8ea"/><rect x="0.5" y="0.5" width="6.5" height="6" fill="#d2d5d8"/></svg>
<span class="t" style="left:759.30px;top:61.60px;font-size:7px;line-height:10px;color:#92979d;transform:scaleX(0.9205);">Shape Effect</span>
<svg style="left:800.1px;top:65.75px;" width="3.8" height="2.09" viewBox="0 0 3.8 2.09"><path d="M0 0H3.8L1.9 2.09Z" fill="#8a8e93"/></svg>
<svg style="left:806.5px;top:76.7px;" width="4.5" height="4.5" viewBox="0 0 4.5 4.5"><path d="M0.4 3V0.4H3" fill="none" stroke="#b5b8bc" stroke-width="0.7"/><path d="M2 2L4 4M4 2.3V4H2.3" fill="none" stroke="#a5a8ac" stroke-width="0.7"/></svg>
<svg style="left:818px;top:36px;" width="22" height="20" viewBox="0 0 22 20"><rect x="1.5" y="1.5" width="14.5" height="13" fill="#fff" stroke="#5f656d" stroke-width="1"/><path d="M5.6 4.2L10 8L5.6 11.8Z" fill="#e4ecfa" stroke="#7b9fd9" stroke-width="0.9"/><path d="M12.4 3.6Q10 5.4 10.8 8.2Q11.4 9.8 13.1 10.4V17.4Q14.5 19.2 15.9 17.4V10.4Q17.6 9.8 18.2 8.2Q19 5.4 16.6 3.6V7.2Q14.5 8.6 12.4 7.2Z" fill="#aeb9cd" stroke="#68707d" stroke-width="0.8"/></svg>
<span class="t" style="left:819.00px;top:56.90px;font-size:7px;line-height:10px;color:#3f4450;transform:scaleX(0.8719);">Player</span>
<svg style="left:841px;top:36.5px;" width="21" height="21" viewBox="0 0 21 21"><path d="M1.7 4.6L5 1.2H13.6Q14.6 1.2 14.6 2.2V18Q14.6 19 13.6 19H2.7Q1.7 19 1.7 18Z" fill="#fdfdfd" stroke="#8d939b" stroke-width="0.9"/><path d="M3.2 5.2L5.6 2.8H13V17.4H3.2Z" fill="#cfdcf5"/><path d="M1.7 4.6H5V1.2" fill="none" stroke="#8d939b" stroke-width="0.8"/><circle cx="11.5" cy="10.5" r="4.7" fill="#fff" stroke="#7a8290" stroke-width="1.3"/><circle cx="11.5" cy="10.5" r="3.6" fill="none" stroke="#c0cbe2" stroke-width="0.9"/><path d="M15 14L18.8 17.8" stroke="#7a8290" stroke-width="2.2" stroke-linecap="round"/><path d="M15 14L18.6 17.6" stroke="#c5cede" stroke-width="0.7"/></svg>
<span class="t" style="left:841.20px;top:56.90px;font-size:7px;line-height:10px;color:#3f4450;transform:scaleX(0.9077);">Preview</span>
<svg style="left:850.1800000000001px;top:69.34px;" width="3.84" height="2.112" viewBox="0 0 3.84 2.112"><path d="M0 0H3.84L1.92 2.112Z" fill="#555"/></svg>
<svg style="left:869px;top:37px;" width="20" height="19" viewBox="0 0 20 19"><rect x="1" y="1.2" width="16.8" height="1.5" fill="#55595f"/><rect x="2.4" y="2.7" width="14" height="9.4" fill="#f1f2f3" stroke="#c5c8cc" stroke-width="0.6"/><rect x="4.6" y="5" width="5" height="0.8" fill="#c0c3c7"/><rect x="4.6" y="7" width="4" height="0.8" fill="#c0c3c7"/><rect x="4.6" y="9" width="3.4" height="0.8" fill="#c0c3c7"/><circle cx="13.5" cy="9.5" r="4.4" fill="#fff" stroke="#8d939b" stroke-width="0.8"/><path d="M12 7L16.2 9.5L12 12Z" fill="#3f9d6c"/><path d="M8.6 12.4L9.4 15.2" stroke="#55595f" stroke-width="1.3"/><path d="M5.6 17.5L6.8 15H12.6L13.8 17.5Z" fill="#55595f"/></svg>
<span class="t" style="left:867.80px;top:56.90px;font-size:7px;line-height:10px;color:#3f4450;transform:scaleX(0.9146);">Publish</span>
<svg style="left:19.8px;top:95px;" width="9.4" height="8.4" viewBox="0 0 9.4 8.4"><rect x="0.5" y="0.5" width="8.4" height="7.3" rx="0.8" fill="#fff" stroke="#555" stroke-width="0.9"/><rect x="1.2" y="1.2" width="3.2" height="2.8" fill="#1b80d2"/><path d="M4.7 1V7.4M1 4.3H8.4M1 6H8.4" stroke="#b5b9be" stroke-width="0.5"/></svg>
<span class="t" style="left:32.00px;top:95.40px;font-size:6.6px;line-height:9px;color:#3a3a3a;transform:scaleX(0.8881);">STORY VIEW</span>
<div style="left:84px;top:91px;width:70.3px;height:18px;background:#1c87d7;"></div>
<span class="t" style="left:90.80px;top:95.70px;font-size:6.4px;line-height:9px;color:#fff;transform:scaleX(0.7869);">1.2</span>
<span class="t" style="left:102.20px;top:93.70px;font-size:8.7px;line-height:12px;color:#fff;transform:scaleX(0.7823);">ヒューマン...</span>
<svg style="left:148.5px;top:93px;" width="4" height="4" viewBox="0 0 4 4"><path d="M0.4 0.4L3.6 3.6M3.6 0.4L0.4 3.6" stroke="#fff" stroke-width="0.8"/></svg>
<span class="t" style="left:158.80px;top:95.70px;font-size:6.6px;line-height:9px;color:#444;transform:scaleX(0.8938);">1.1</span>
<span class="t" style="left:170.90px;top:93.70px;font-size:8.7px;line-height:12px;color:#444;transform:scaleX(0.7836);">トップページ</span>
<svg style="left:796.5px;top:92.5px;" width="10" height="7" viewBox="0 0 10 7"><rect x="1.4" y="0.5" width="7" height="4.6" fill="#fff" stroke="#6b7378" stroke-width="0.9"/><rect x="0" y="5.4" width="9.8" height="1.3" fill="#6b7378"/></svg>
<svg style="left:814px;top:92.2px;" width="10" height="7.6" viewBox="0 0 10 7.6"><rect x="0.5" y="0.5" width="9" height="6.4" rx="1" fill="#fff" stroke="#8f979c" stroke-width="0.9"/></svg>
<svg style="left:833px;top:91.3px;" width="7.5" height="9.6" viewBox="0 0 7.5 9.6"><rect x="0.5" y="0.5" width="6.3" height="8.5" rx="0.8" fill="#fff" stroke="#7d858a" stroke-width="0.9"/></svg>
<svg style="left:850px;top:93.2px;" width="8.6" height="5.4" viewBox="0 0 8.6 5.4"><rect x="0.5" y="0.5" width="7.5" height="4.2" rx="0.8" fill="#fff" stroke="#7d858a" stroke-width="0.9"/></svg>
<svg style="left:869px;top:91.8px;" width="5.6" height="8.4" viewBox="0 0 5.6 8.4"><rect x="0.5" y="0.5" width="4.4" height="7.2" rx="0.8" fill="#fff" stroke="#7d858a" stroke-width="0.9"/><rect x="3.4" y="1" width="1" height="6.2" fill="#c5cacd"/></svg>
<svg style="left:885.6px;top:92.3px;" width="8.8" height="8.8" viewBox="0 0 8.8 8.8"><g transform="translate(4.4 4.4)"><rect x="-0.75" y="-3.9" width="1.5" height="1.95" transform="rotate(0)" fill="#424a50"/><rect x="-0.75" y="-3.9" width="1.5" height="1.95" transform="rotate(45)" fill="#424a50"/><rect x="-0.75" y="-3.9" width="1.5" height="1.95" transform="rotate(90)" fill="#424a50"/><rect x="-0.75" y="-3.9" width="1.5" height="1.95" transform="rotate(135)" fill="#424a50"/><rect x="-0.75" y="-3.9" width="1.5" height="1.95" transform="rotate(180)" fill="#424a50"/><rect x="-0.75" y="-3.9" width="1.5" height="1.95" transform="rotate(225)" fill="#424a50"/><rect x="-0.75" y="-3.9" width="1.5" height="1.95" transform="rotate(270)" fill="#424a50"/><rect x="-0.75" y="-3.9" width="1.5" height="1.95" transform="rotate(315)" fill="#424a50"/><circle r="2.808" fill="#424a50"/><circle r="1.56" fill="#fff"/></g></svg>
<span class="t" style="left:14.00px;top:114.10px;font-size:9.8px;line-height:14px;color:#555;transform:scaleX(0.8505);">Scenes</span>
<svg style="left:101.3px;top:117px;" width="7" height="7" viewBox="0 0 7 7"><rect x="0.5" y="2" width="5" height="4.5" fill="#f7f8fa" stroke="#9aa0a6" stroke-width="0.8"/><path d="M1.6 2V0.5H6.5V5H5.5" fill="none" stroke="#9aa0a6" stroke-width="0.8"/></svg>
<div style="left:14px;top:132px;width:94px;height:17.4px;background:#fff;border:1px solid #d5d9de;box-sizing:border-box;border-radius:1.5px;"></div>
<span class="t" style="left:22.20px;top:136.00px;font-size:8.2px;line-height:11px;color:#444;transform:scaleX(0.8892);">1 Sample</span>
<svg style="left:96.42px;top:140.16000000000003px;" width="4.56" height="2.508" viewBox="0 0 4.56 2.508"><path d="M0 0H4.56L2.28 2.508Z" fill="#333"/></svg>
<svg style="left:23.2px;top:162.3px;" width="16.8" height="10.3"><rect width="100%" height="100%" fill="#3fa4ea"/><rect x="0" y="0" width="100%" height="2.4" fill="#2f86de"/><rect x="2" y="2" width="12" height="1.2" fill="#bfe0fa"/><rect x="2" y="5" width="5" height="1" fill="#bcd9f7"/><rect x="9" y="5" width="5" height="1" fill="#bcd9f7"/><rect x="2" y="7.2" width="12" height="0.8" fill="#9cc7f2"/><rect x="0.25" y="0.25" width="16.3" height="9.8" fill="none" stroke="#c9cdd2" stroke-width="0.5"/></svg>
<svg style="left:52px;top:162.3px;" width="16.8" height="10.3"><rect width="100%" height="100%" fill="#fbfbfb"/><rect x="1" y="1" width="3" height="2" fill="#3a6ea8"/><rect x="5" y="1.5" width="6" height="0.8" fill="#777"/><rect x="4" y="4" width="2" height="1" fill="#999"/><rect x="8" y="4" width="2" height="1" fill="#999"/><rect x="12" y="4" width="2" height="1" fill="#999"/><rect x="6" y="6.5" width="5" height="0.8" fill="#aaa"/><rect x="0.25" y="0.25" width="16.3" height="9.8" fill="none" stroke="#c9cdd2" stroke-width="0.5"/></svg>
<svg style="left:80.8px;top:162.3px;" width="16.8" height="10.3"><rect width="100%" height="100%" fill="#fbfbfb"/><rect x="1" y="1" width="3" height="2" fill="#3a6ea8"/><rect x="6" y="2.5" width="9" height="5.5" fill="#b88a58"/><rect x="7" y="2.5" width="5" height="2.5" fill="#3e3a36"/><rect x="0.25" y="0.25" width="16.3" height="9.8" fill="none" stroke="#c9cdd2" stroke-width="0.5"/></svg>
<span class="t" style="left:21.00px;top:179.40px;font-size:4.2px;line-height:6px;color:#6a6e73;transform:scaleX(0.7921);">1.1 トップ...</span>
<span class="t" style="left:49.80px;top:179.40px;font-size:4.6px;line-height:6px;color:#6a6e73;transform:scaleX(0.8054);">1.3 OUR P...</span>
<span class="t" style="left:78.40px;top:179.40px;font-size:4.6px;line-height:6px;color:#6a6e73;transform:scaleX(0.8131);">1.4 OUR S...</span>
<svg style="left:29.54px;top:186.82px;" width="4.32" height="2.3760000000000003" viewBox="0 0 4.32 2.3760000000000003"><path d="M0 0H4.32L2.16 2.3760000000000003Z" fill="#3a3a3a"/></svg>
<div style="left:21.8px;top:194px;width:19.8px;height:13.6px;background:#fff;border:1px solid #1b80d2;box-sizing:border-box;"></div>
<svg style="left:22.8px;top:195px;" width="17.8" height="11.6"><rect width="100%" height="100%" fill="#fff"/><rect x="1.2" y="1.2" width="15.4" height="3" fill="#2f55a4"/><rect x="5" y="6.5" width="4" height="4" fill="none" stroke="#9db6da" stroke-width="0.5"/><rect x="11" y="6.5" width="4" height="4" fill="none" stroke="#9db6da" stroke-width="0.5"/><rect x="0.25" y="0.25" width="17.3" height="11.1" fill="none" stroke="#c9cdd2" stroke-width="0.5"/></svg>
<span class="t" style="left:21.40px;top:212.40px;font-size:4.3px;line-height:6px;color:#6a6e73;transform:scaleX(0.7863);">1.2 ヒュー...</span>
<svg style="left:36.64px;top:219.92px;" width="4.32" height="2.3760000000000003" viewBox="0 0 4.32 2.3760000000000003"><path d="M0 0H4.32L2.16 2.3760000000000003Z" fill="#c0282d"/></svg>
<svg style="left:23.2px;top:229px;" width="16.8" height="10.7"><rect width="100%" height="100%" fill="#fbfbfb"/><rect x="1" y="1" width="3" height="2" fill="#3a6ea8"/><rect x="5" y="1.5" width="6" height="0.8" fill="#777"/><rect x="5" y="4.5" width="7" height="0.8" fill="#6a9ad8"/><rect x="6" y="6.5" width="5" height="0.8" fill="#9abbe6"/><rect x="0.25" y="0.25" width="16.3" height="10.2" fill="none" stroke="#c9cdd2" stroke-width="0.5"/></svg>
<span class="t" style="left:21.40px;top:245.90px;font-size:4.3px;line-height:6px;color:#6a6e73;transform:scaleX(0.7863);">1.5 ヒュー...</span>
<svg style="left:29.54px;top:253.22px;" width="4.32" height="2.3760000000000003" viewBox="0 0 4.32 2.3760000000000003"><path d="M0 0H4.32L2.16 2.3760000000000003Z" fill="#3a3a3a"/></svg>
<svg style="left:23.2px;top:262.2px;" width="16.8" height="10.7"><rect width="100%" height="100%" fill="#fbfbfb"/><rect x="1" y="1" width="3" height="2" fill="#3a6ea8"/><rect x="5" y="1.5" width="5" height="0.8" fill="#777"/><rect x="3" y="5" width="6" height="0.8" fill="#9abbe6"/><rect x="11" y="2.5" width="4.5" height="6.5" fill="#2f7f9a"/><rect x="12" y="4" width="2.4" height="3" fill="#d9a066"/><rect x="0.25" y="0.25" width="16.3" height="10.2" fill="none" stroke="#c9cdd2" stroke-width="0.5"/></svg>
<span class="t" style="left:21.40px;top:279.00px;font-size:4.6px;line-height:6px;color:#6a6e73;transform:scaleX(0.8258);">1.6 事例...</span>
<svg style="left:29.54px;top:286.42px;" width="4.32" height="2.3760000000000003" viewBox="0 0 4.32 2.3760000000000003"><path d="M0 0H4.32L2.16 2.3760000000000003Z" fill="#3a3a3a"/></svg>
<svg style="left:23.2px;top:295.6px;" width="16.8" height="10.7"><rect width="100%" height="100%" fill="#fbfbfb"/><rect x="1" y="1" width="3" height="2" fill="#3a6ea8"/><rect x="5" y="1.5" width="5" height="0.8" fill="#777"/><rect x="3" y="5" width="6" height="0.8" fill="#9abbe6"/><rect x="11" y="2.5" width="4.5" height="6.5" fill="#5a5550"/><rect x="12" y="4" width="2.4" height="3" fill="#b08a6a"/><rect x="0.25" y="0.25" width="16.3" height="10.2" fill="none" stroke="#c9cdd2" stroke-width="0.5"/></svg>
<span class="t" style="left:21.40px;top:312.10px;font-size:4.6px;line-height:6px;color:#6a6e73;transform:scaleX(0.8950);">1.7 相談</span>
<div style="left:220px;top:126px;width:372px;height:209.5px;background:#fff;"></div>
<div style="left:220px;top:126px;width:372px;height:54.3px;background:#4f81bf;"></div>
<span class="t" style="left:290.40px;top:135.80px;font-size:16px;line-height:22px;color:#fff;transform:scaleX(0.9583);-webkit-text-stroke:0.45px #fff;">ヒューマンサイエンスのパーパス</span>
<span class="t" style="left:353.30px;top:161.80px;font-size:7.6px;line-height:11px;color:#fff;transform:scaleX(1.0586);">CORPORATE PHILOSOPHY</span>
<div style="left:273px;top:194px;width:117px;height:117px;background:#fff;border:1px solid #5b8ac6;box-sizing:border-box;"></div>
<div style="left:422px;top:194px;width:117.6px;height:117px;background:#fff;border:1px solid #5b8ac6;box-sizing:border-box;"></div>
<span class="t" style="left:306.60px;top:195.40px;font-size:43px;line-height:60px;color:#4f81bf;transform:scaleX(0.8865);-webkit-text-stroke:0.7px #fff;">01</span>
<span class="t" style="left:456.80px;top:195.40px;font-size:43px;line-height:60px;color:#4f81bf;transform:scaleX(0.9785);-webkit-text-stroke:0.7px #fff;">02</span>
<span class="t" style="left:313.90px;top:252.70px;font-size:16.6px;line-height:23px;color:#1a1a1a;transform:scaleX(0.9190);">OUR</span>
<span class="t" style="left:295.60px;top:274.80px;font-size:16.6px;line-height:23px;color:#1a1a1a;transform:scaleX(0.8722);">PURPOSE</span>
<span class="t" style="left:463.70px;top:252.70px;font-size:16.6px;line-height:23px;color:#1a1a1a;transform:scaleX(0.9190);">OUR</span>
<span class="t" style="left:435.10px;top:274.80px;font-size:16.6px;line-height:23px;color:#1a1a1a;transform:scaleX(0.8919);">STRENGTHS</span>
<svg style="left:229px;top:230px;" width="24" height="24" viewBox="0 0 24 24"><g transform="translate(12 12)"><circle r="11.6" fill="#4a7dbd"/><path d="M5.5 0H-5M-0.8 -4.6L-5.4 0L-0.8 4.6" fill="none" stroke="#fff" stroke-width="2.4" stroke-linecap="round" stroke-linejoin="round"/></g></svg>
<svg style="left:559px;top:230px;" width="24" height="24" viewBox="0 0 24 24"><g transform="translate(12 12)"><circle r="11.6" fill="#7a7a7a"/><path d="M-5.5 0H5M0.8 -4.6L5.4 0L0.8 4.6" fill="none" stroke="#fff" stroke-width="2.4" stroke-linecap="round" stroke-linejoin="round"/></g></svg>
<svg style="left:228px;top:317.5px;" width="6" height="13" viewBox="0 0 6 13"><path d="M1 0.5V12M1 6Q4.5 5 4.2 8.5Q4 11 2.4 12.4M3.8 0.8Q1.6 2.4 3.4 4.6" fill="none" stroke="#3a6fb5" stroke-width="0.9"/></svg>
<span class="t" style="left:235.90px;top:320.50px;font-size:4.9px;line-height:7px;color:#333;transform:scaleX(1.2408);">HUMAN SCIENCE</span>
<span class="t" style="left:137.10px;top:358.00px;font-size:10.8px;line-height:15px;color:#1b80d2;transform:scaleX(0.8454);">Timeline</span>
<span class="t" style="left:186.80px;top:358.00px;font-size:10.5px;line-height:15px;color:#444;transform:scaleX(0.7861);">States</span>
<span class="t" style="left:225.50px;top:358.00px;font-size:10.8px;line-height:15px;color:#444;transform:scaleX(0.8294);">Notes</span>
<div style="left:122.3px;top:377px;width:556px;height:16px;background:#eef1f5;"></div>
<div style="left:137.6px;top:380.4px;width:10.5px;height:10.2px;background:#fff;border:1px solid #d9dde2;box-sizing:border-box;"></div>
<svg style="left:139.1px;top:383.3px;" width="7.6" height="5.2" viewBox="0 0 7.6 5.2"><path d="M0.1 2.6Q3.8 -1.9 7.5 2.6Q3.8 7.1 0.1 2.6Z" fill="#3a3a3a"/><circle cx="3.8" cy="2.6" r="1.65" fill="#fff"/><circle cx="3.8" cy="2.6" r="0.85" fill="#3a3a3a"/></svg>
<div style="left:158.2px;top:380.4px;width:10.5px;height:10.2px;background:#fff;border:1px solid #d9dde2;box-sizing:border-box;"></div>
<svg style="left:160.2px;top:381.8px;" width="6.6" height="6.2" viewBox="0 0 6.6 6.2"><rect x="0" y="2.8" width="6.6" height="3.3" rx="0.4" fill="#4a4a4a"/><path d="M1.7 3V1.8Q3.3 -0.2 4.9 1.8V3" fill="none" stroke="#4a4a4a" stroke-width="1"/></svg>
<div style="left:122.3px;top:409.29999999999995px;width:132px;height:1px;background:#edf0f3;"></div>
<div style="left:254px;top:409.29999999999995px;width:424px;height:1px;background:#edf0f3;"></div>
<div style="left:137.6px;top:395.90000000000003px;width:10.5px;height:10.2px;background:#fff;border:1px solid #d9dde2;box-sizing:border-box;"></div>
<svg style="left:139.1px;top:398.90000000000003px;" width="7.6" height="5.2" viewBox="0 0 7.6 5.2"><path d="M0.1 2.6Q3.8 -1.9 7.5 2.6Q3.8 7.1 0.1 2.6Z" fill="#3a3a3a"/><circle cx="3.8" cy="2.6" r="1.65" fill="#fff"/><circle cx="3.8" cy="2.6" r="0.85" fill="#3a3a3a"/></svg>
<div style="left:158.2px;top:395.90000000000003px;width:10.5px;height:10.2px;background:#fff;border:1px solid #d9dde2;box-sizing:border-box;"></div>
<span class="t" style="left:181.60px;top:396.50px;font-size:7px;line-height:10px;color:#444;transform:scaleX(0.9700);">Icon 2</span>
<div style="left:122.3px;top:426.19999999999993px;width:132px;height:1px;background:#edf0f3;"></div>
<div style="left:254px;top:426.19999999999993px;width:424px;height:1px;background:#edf0f3;"></div>
<div style="left:137.6px;top:413.0px;width:10.5px;height:10.2px;background:#fff;border:1px solid #d9dde2;box-sizing:border-box;"></div>
<svg style="left:139.1px;top:416.0px;" width="7.6" height="5.2" viewBox="0 0 7.6 5.2"><path d="M0.1 2.6Q3.8 -1.9 7.5 2.6Q3.8 7.1 0.1 2.6Z" fill="#3a3a3a"/><circle cx="3.8" cy="2.6" r="1.65" fill="#fff"/><circle cx="3.8" cy="2.6" r="0.85" fill="#3a3a3a"/></svg>
<div style="left:158.2px;top:413.0px;width:10.5px;height:10.2px;background:#fff;border:1px solid #d9dde2;box-sizing:border-box;"></div>
<span class="t" style="left:181.60px;top:413.60px;font-size:7px;line-height:10px;color:#444;transform:scaleX(0.9491);">Icon 1</span>
<div style="left:122.3px;top:443.09999999999997px;width:132px;height:1px;background:#edf0f3;"></div>
<div style="left:254px;top:443.09999999999997px;width:424px;height:1px;background:#edf0f3;"></div>
<div style="left:137.6px;top:429.90000000000003px;width:10.5px;height:10.2px;background:#fff;border:1px solid #d9dde2;box-sizing:border-box;"></div>
<svg style="left:139.1px;top:432.90000000000003px;" width="7.6" height="5.2" viewBox="0 0 7.6 5.2"><path d="M0.1 2.6Q3.8 -1.9 7.5 2.6Q3.8 7.1 0.1 2.6Z" fill="#3a3a3a"/><circle cx="3.8" cy="2.6" r="1.65" fill="#fff"/><circle cx="3.8" cy="2.6" r="0.85" fill="#3a3a3a"/></svg>
<div style="left:158.2px;top:429.90000000000003px;width:10.5px;height:10.2px;background:#fff;border:1px solid #d9dde2;box-sizing:border-box;"></div>
<span class="t" style="left:181.60px;top:430.50px;font-size:7px;line-height:10px;color:#444;transform:scaleX(0.9555);">Rectangle 4</span>
<span class="t" style="left:273.55px;top:378.80px;font-size:6.4px;line-height:9px;color:#555;">00:01</span>
<span class="t" style="left:301.60px;top:378.80px;font-size:6.4px;line-height:9px;color:#555;">00:02</span>
<span class="t" style="left:329.65px;top:378.80px;font-size:6.4px;line-height:9px;color:#555;">00:03</span>
<span class="t" style="left:357.70px;top:378.80px;font-size:6.4px;line-height:9px;color:#555;">00:04</span>
<span class="t" style="left:385.75px;top:378.80px;font-size:6.4px;line-height:9px;color:#555;">00:05</span>
<span class="t" style="left:413.80px;top:378.80px;font-size:6.4px;line-height:9px;color:#555;">00:06</span>
<span class="t" style="left:441.85px;top:378.80px;font-size:6.4px;line-height:9px;color:#555;">00:07</span>
<span class="t" style="left:469.90px;top:378.80px;font-size:6.4px;line-height:9px;color:#555;">00:08</span>
<span class="t" style="left:497.95px;top:378.80px;font-size:6.4px;line-height:9px;color:#555;">00:09</span>
<span class="t" style="left:526.00px;top:378.80px;font-size:6.4px;line-height:9px;color:#555;">00:10</span>
<span class="t" style="left:554.05px;top:378.80px;font-size:6.4px;line-height:9px;color:#555;">00:11</span>
<span class="t" style="left:582.10px;top:378.80px;font-size:6.4px;line-height:9px;color:#555;">00:12</span>
<span class="t" style="left:610.15px;top:378.80px;font-size:6.4px;line-height:9px;color:#555;">00:13</span>
<span class="t" style="left:638.20px;top:378.80px;font-size:6.4px;line-height:9px;color:#555;">00:14</span>
<span class="t" style="left:666.25px;top:378.80px;font-size:6.4px;line-height:9px;color:#555;transform:scaleX(0.9033);">00:1</span>
<svg style="left:254px;top:388.6px;" width="424" height="4" viewBox="0 0 424 4"><rect x="0.30" y="0" width="0.7" height="4" fill="#b7bcc2"/><rect x="5.91" y="1.7999999999999998" width="0.7" height="2.2" fill="#b7bcc2"/><rect x="11.52" y="1.7999999999999998" width="0.7" height="2.2" fill="#b7bcc2"/><rect x="17.13" y="1.7999999999999998" width="0.7" height="2.2" fill="#b7bcc2"/><rect x="22.74" y="1.7999999999999998" width="0.7" height="2.2" fill="#b7bcc2"/><rect x="28.35" y="0" width="0.7" height="4" fill="#b7bcc2"/><rect x="33.96" y="1.7999999999999998" width="0.7" height="2.2" fill="#b7bcc2"/><rect x="39.57" y="1.7999999999999998" width="0.7" height="2.2" fill="#b7bcc2"/><rect x="45.18" y="1.7999999999999998" width="0.7" height="2.2" fill="#b7bcc2"/><rect x="50.79" y="1.7999999999999998" width="0.7" height="2.2" fill="#b7bcc2"/><rect x="56.40" y="0" width="0.7" height="4" fill="#b7bcc2"/><rect x="62.01" y="1.7999999999999998" width="0.7" height="2.2" fill="#b7bcc2"/><rect x="67.62" y="1.7999999999999998" width="0.7" height="2.2" fill="#b7bcc2"/><rect x="73.23" y="1.7999999999999998" width="0.7" height="2.2" fill="#b7bcc2"/><rect x="78.84" y="1.7999999999999998" width="0.7" height="2.2" fill="#b7bcc2"/><rect x="84.45" y="0" width="0.7" height="4" fill="#b7bcc2"/><rect x="90.06" y="1.7999999999999998" width="0.7" height="2.2" fill="#b7bcc2"/><rect x="95.67" y="1.7999999999999998" width="0.7" height="2.2" fill="#b7bcc2"/><rect x="101.28" y="1.7999999999999998" width="0.7" height="2.2" fill="#b7bcc2"/><rect x="106.89" y="1.7999999999999998" width="0.7" height="2.2" fill="#b7bcc2"/><rect x="112.50" y="0" width="0.7" height="4" fill="#b7bcc2"/><rect x="118.11" y="1.7999999999999998" width="0.7" height="2.2" fill="#b7bcc2"/><rect x="123.72" y="1.7999999999999998" width="0.7" height="2.2" fill="#b7bcc2"/><rect x="129.33" y="1.7999999999999998" width="0.7" height="2.2" fill="#b7bcc2"/><rect x="134.94" y="1.7999999999999998" width="0.7" height="2.2" fill="#b7bcc2"/><rect x="140.55" y="0" width="0.7" height="4" fill="#b7bcc2"/><rect x="146.16" y="1.7999999999999998" width="0.7" height="2.2" fill="#b7bcc2"/><rect x="151.77" y="1.7999999999999998" width="0.7" height="2.2" fill="#b7bcc2"/><rect x="157.38" y="1.7999999999999998" width="0.7" height="2.2" fill="#b7bcc2"/><rect x="162.99" y="1.7999999999999998" width="0.7" height="2.2" fill="#b7bcc2"/><rect x="168.60" y="0" width="0.7" height="4" fill="#b7bcc2"/><rect x="174.21" y="1.7999999999999998" width="0.7" height="2.2" fill="#b7bcc2"/><rect x="179.82" y="1.7999999999999998" width="0.7" height="2.2" fill="#b7bcc2"/><rect x="185.43" y="1.7999999999999998" width="0.7" height="2.2" fill="#b7bcc2"/><rect x="191.04" y="1.7999999999999998" width="0.7" height="2.2" fill="#b7bcc2"/><rect x="196.65" y="0" width="0.7" height="4" fill="#b7bcc2"/><rect x="202.26" y="1.7999999999999998" width="0.7" height="2.2" fill="#b7bcc2"/><rect x="207.87" y="1.7999999999999998" width="0.7" height="2.2" fill="#b7bcc2"/><rect x="213.48" y="1.7999999999999998" width="0.7" height="2.2" fill="#b7bcc2"/><rect x="219.09" y="1.7999999999999998" width="0.7" height="2.2" fill="#b7bcc2"/><rect x="224.70" y="0" width="0.7" height="4" fill="#b7bcc2"/><rect x="230.31" y="1.7999999999999998" width="0.7" height="2.2" fill="#b7bcc2"/><rect x="235.92" y="1.7999999999999998" width="0.7" height="2.2" fill="#b7bcc2"/><rect x="241.53" y="1.7999999999999998" width="0.7" height="2.2" fill="#b7bcc2"/><rect x="247.14" y="1.7999999999999998" width="0.7" height="2.2" fill="#b7bcc2"/><rect x="252.75" y="0" width="0.7" height="4" fill="#b7bcc2"/><rect x="258.36" y="1.7999999999999998" width="0.7" height="2.2" fill="#b7bcc2"/><rect x="263.97" y="1.7999999999999998" width="0.7" height="2.2" fill="#b7bcc2"/><rect x="269.58" y="1.7999999999999998" width="0.7" height="2.2" fill="#b7bcc2"/><rect x="275.19" y="1.7999999999999998" width="0.7" height="2.2" fill="#b7bcc2"/><rect x="280.80" y="0" width="0.7" height="4" fill="#b7bcc2"/><rect x="286.41" y="1.7999999999999998" width="0.7" height="2.2" fill="#b7bcc2"/><rect x="292.02" y="1.7999999999999998" width="0.7" height="2.2" fill="#b7bcc2"/><rect x="297.63" y="1.7999999999999998" width="0.7" height="2.2" fill="#b7bcc2"/><rect x="303.24" y="1.7999999999999998" width="0.7" height="2.2" fill="#b7bcc2"/><rect x="308.85" y="0" width="0.7" height="4" fill="#b7bcc2"/><rect x="314.46" y="1.7999999999999998" width="0.7" height="2.2" fill="#b7bcc2"/><rect x="320.07" y="1.7999999999999998" width="0.7" height="2.2" fill="#b7bcc2"/><rect x="325.68" y="1.7999999999999998" width="0.7" height="2.2" fill="#b7bcc2"/><rect x="331.29" y="1.7999999999999998" width="0.7" height="2.2" fill="#b7bcc2"/><rect x="336.90" y="0" width="0.7" height="4" fill="#b7bcc2"/><rect x="342.51" y="1.7999999999999998" width="0.7" height="2.2" fill="#b7bcc2"/><rect x="348.12" y="1.7999999999999998" width="0.7" height="2.2" fill="#b7bcc2"/><rect x="353.73" y="1.7999999999999998" width="0.7" height="2.2" fill="#b7bcc2"/><rect x="359.34" y="1.7999999999999998" width="0.7" height="2.2" fill="#b7bcc2"/><rect x="364.95" y="0" width="0.7" height="4" fill="#b7bcc2"/><rect x="370.56" y="1.7999999999999998" width="0.7" height="2.2" fill="#b7bcc2"/><rect x="376.17" y="1.7999999999999998" width="0.7" height="2.2" fill="#b7bcc2"/><rect x="381.78" y="1.7999999999999998" width="0.7" height="2.2" fill="#b7bcc2"/><rect x="387.39" y="1.7999999999999998" width="0.7" height="2.2" fill="#b7bcc2"/><rect x="393.00" y="0" width="0.7" height="4" fill="#b7bcc2"/><rect x="398.61" y="1.7999999999999998" width="0.7" height="2.2" fill="#b7bcc2"/><rect x="404.22" y="1.7999999999999998" width="0.7" height="2.2" fill="#b7bcc2"/><rect x="409.83" y="1.7999999999999998" width="0.7" height="2.2" fill="#b7bcc2"/><rect x="415.44" y="1.7999999999999998" width="0.7" height="2.2" fill="#b7bcc2"/><rect x="421.05" y="0" width="0.7" height="4" fill="#b7bcc2"/></svg>
<div style="left:254.6px;top:394.4px;width:139.6px;height:13.7px;background:#e5e9ee;border:1px solid #d8dde3;box-sizing:border-box;"></div>
<svg style="left:259.4px;top:397.9px;" width="8.6" height="7.4" viewBox="0 0 8.6 7.4"><path d="M2.2 6.6Q0.5 6.4 0.6 4.8Q0.8 3.4 2.2 3.4Q2.4 0.8 4.6 0.7Q6.4 0.8 6.8 2.8Q8 3.4 7.8 5Q7.6 6.6 6 6.6Z" fill="#f8f9fb" stroke="#5a6a80" stroke-width="0.8"/></svg>
<span class="t" style="left:274.00px;top:397.00px;font-size:6.8px;line-height:10px;color:#444;transform:scaleX(1.0179);">arrow icon 1</span>
<svg style="left:388.4px;top:399.2px;" width="3" height="4.6" viewBox="0 0 3 4.6"><path d="M0 0L3 2.3L0 4.6Z" fill="#555"/></svg>
<div style="left:254.6px;top:411.29999999999995px;width:139.6px;height:13.7px;background:#e5e9ee;border:1px solid #d8dde3;box-sizing:border-box;"></div>
<svg style="left:259.4px;top:414.79999999999995px;" width="8.6" height="7.4" viewBox="0 0 8.6 7.4"><path d="M2.2 6.6Q0.5 6.4 0.6 4.8Q0.8 3.4 2.2 3.4Q2.4 0.8 4.6 0.7Q6.4 0.8 6.8 2.8Q8 3.4 7.8 5Q7.6 6.6 6 6.6Z" fill="#f8f9fb" stroke="#5a6a80" stroke-width="0.8"/></svg>
<span class="t" style="left:274.00px;top:413.90px;font-size:6.8px;line-height:10px;color:#444;transform:scaleX(1.0179);">arrow icon 1</span>
<svg style="left:388.4px;top:416.09999999999997px;" width="3" height="4.6" viewBox="0 0 3 4.6"><path d="M0 0L3 2.3L0 4.6Z" fill="#555"/></svg>
<div style="left:254.6px;top:428.09999999999997px;width:139.6px;height:13.7px;background:#e5e9ee;border:1px solid #d8dde3;box-sizing:border-box;"></div>
<svg style="left:259px;top:431.5px;" width="9.4" height="7.4" viewBox="0 0 9.4 7.4"><rect x="0.5" y="0.5" width="8.4" height="6.4" rx="0.8" fill="#dbe5f5" stroke="#5a6a80" stroke-width="0.8"/></svg>
<span class="t" style="left:274.00px;top:430.70px;font-size:6.8px;line-height:10px;color:#444;transform:scaleX(0.9169);">02 OUR STRENGTHS</span>
<svg style="left:388.4px;top:432.9px;" width="3" height="4.6" viewBox="0 0 3 4.6"><path d="M0 0L3 2.3L0 4.6Z" fill="#555"/></svg>
<div style="left:254.6px;top:444.9px;width:139.6px;height:2.4px;background:#e5e9ee;border:1px solid #d8dde3;box-sizing:border-box;"></div>
<div style="left:393.8px;top:393px;width:1px;height:54px;background:#cfe0f3;"></div>
<span class="t" style="left:398.80px;top:393.20px;font-size:6.4px;line-height:9px;color:#c5c9ce;transform:scaleX(0.9925);">End</span>
<div style="left:253.6px;top:392px;width:1px;height:55px;background:#b5d0ee;"></div>
<svg style="left:249.6px;top:387.4px;" width="9.6" height="5.6" viewBox="0 0 9.6 5.6"><path d="M0 0H9.6L4.8 5.4Z" fill="#1b80d2"/></svg>
<div style="left:678.3px;top:377px;width:12.4px;height:70px;background:#dde1e5;"></div>
<div style="left:678.3px;top:377.3px;width:12.4px;height:11.7px;background:#fff;border:1px solid #dfe3e7;box-sizing:border-box;"></div>
<div style="left:678.3px;top:389px;width:12.4px;height:22px;background:#a4a9af;"></div>
<div style="left:678.3px;top:435px;width:12.4px;height:11.7px;background:#fff;border:1px solid #dfe3e7;box-sizing:border-box;"></div>
<svg style="left:682.7px;top:381.5px;" width="3.8" height="3" viewBox="0 0 3.8 3"><path d="M0 3L1.9 0L3.8 3Z" fill="#9a9fa5"/></svg>
<svg style="left:682.7px;top:439.5px;" width="3.8" height="3" viewBox="0 0 3.8 3"><path d="M0 0L1.9 3L3.8 0Z" fill="#777"/></svg>
<div style="left:682.5px;top:398.0px;width:4px;height:0.7px;background:#d8dbdf;"></div>
<div style="left:682.5px;top:399.6px;width:4px;height:0.7px;background:#d8dbdf;"></div>
<div style="left:682.5px;top:401.2px;width:4px;height:0.7px;background:#d8dbdf;"></div>
<div style="left:122.3px;top:447.3px;width:131.7px;height:11.5px;background:#eef1f5;"></div>
<div style="left:254px;top:447.3px;width:424.3px;height:11.5px;background:#dde1e5;"></div>
<div style="left:254.6px;top:447.3px;width:11.2px;height:11.5px;background:#eef1f5;"></div>
<div style="left:667px;top:447.3px;width:11.3px;height:11.5px;background:#eef1f5;"></div>
<svg style="left:128.6px;top:449.8px;" width="3.4" height="6" viewBox="0 0 3.4 6"><path d="M0 0L3.2 3L0 6Z" fill="#555"/></svg>
<div style="left:140.4px;top:450.3px;width:5.4px;height:5.4px;background:#555;"></div>
<div style="left:154.5px;top:448.8px;width:0.7px;height:8.4px;background:#cfd3d8;"></div>
<svg style="left:164.5px;top:451.2px;" width="5.6" height="3.6" viewBox="0 0 5.6 3.6"><path d="M0 3.6L2.8 0L5.6 3.6Z" fill="#666"/></svg>
<svg style="left:178.5px;top:450.6px;" width="16" height="4.6" viewBox="0 0 16 4.6"><path d="M4 2.3H15.5" stroke="#666" stroke-width="0.8"/><circle cx="2.2" cy="2.3" r="1.7" fill="#fff" stroke="#666" stroke-width="0.8"/></svg>
<svg style="left:199.5px;top:449.6px;" width="16" height="5.4" viewBox="0 0 16 5.4"><path d="M0 5.4L2.6 2.2L4.4 4.2L8.8 0L15.4 5.4Z" fill="#666"/></svg>
<span class="t" style="left:224.30px;top:449.00px;font-size:6.2px;line-height:9px;color:#555;transform:scaleX(1.0195);">00:05.00</span>
<svg style="left:259px;top:451px;" width="2.6" height="3.8" viewBox="0 0 2.6 3.8"><path d="M2.6 0L0 1.9L2.6 3.8Z" fill="#a7acb2"/></svg>
<svg style="left:670.5px;top:451px;" width="2.6" height="3.8" viewBox="0 0 2.6 3.8"><path d="M0 0L2.6 1.9L0 3.8Z" fill="#a7acb2"/></svg>
<svg style="left:637px;top:359.6px;" width="10" height="11" viewBox="0 0 10 11"><path d="M5 1V9.5" stroke="#2b5fa8" stroke-width="1.1"/><rect x="3.4" y="0.3" width="3.2" height="1.3" fill="#2b5fa8"/><path d="M1.5 6.2H8.5" stroke="#555" stroke-width="0.9"/><path d="M0.8 9.2Q5 11.8 9.2 9.2" fill="none" stroke="#555" stroke-width="0.9"/><path d="M3.2 4.4L5 6L6.8 4.4" fill="none" stroke="#555" stroke-width="0.8"/></svg>
<svg style="left:658.96px;top:364.18px;" width="4.08" height="2.244" viewBox="0 0 4.08 2.244"><path d="M0 0H4.08L2.04 2.244Z" fill="#888"/></svg>
<svg style="left:668.3px;top:361.5px;" width="7.8" height="7.6" viewBox="0 0 7.8 7.6"><path d="M1.9 2.4V0.9H7.3V5.6H6" fill="none" stroke="#a4aab0" stroke-width="0.8"/><rect x="1.9" y="0.5" width="5.4" height="1.1" fill="#a4aab0"/><rect x="0.5" y="2.6" width="5.4" height="4.6" fill="#f7f8fa" stroke="#a4aab0" stroke-width="0.8"/><rect x="0.5" y="2.3" width="5.4" height="1" fill="#a4aab0"/></svg>
<span class="t" style="left:6.50px;top:463.20px;font-size:6.3px;line-height:9px;color:#c9c9cc;transform:scaleX(1.0628);">Slide 2 of 7</span>
<span class="t" style="left:49.50px;top:463.20px;font-size:6.3px;line-height:9px;color:#c9c9cc;transform:scaleX(1.0283);">960 × 540</span>
<span class="t" style="left:88.00px;top:463.20px;font-size:6.3px;line-height:9px;color:#c9c9cc;transform:scaleX(1.0748);">"Clean"</span>
<svg style="left:119.2px;top:463.2px;" width="8.6" height="8.6" viewBox="0 0 8.6 8.6"><circle cx="4.3" cy="4.3" r="3.7" fill="none" stroke="#f0f0f2" stroke-width="0.9"/><path d="M4.3 2.2V4.9" stroke="#f0f0f2" stroke-width="1"/><rect x="3.8" y="5.6" width="1" height="1" fill="#f0f0f2"/></svg>
<span class="t" style="left:130.50px;top:463.20px;font-size:6.3px;line-height:9px;color:#c9c9cc;transform:scaleX(1.0221);">175 Accessibility Issues</span>
<div style="left:691px;top:109px;width:208px;height:23px;background:#e8ecf0;"></div>
<div style="left:691px;top:109px;width:39.3px;height:23.5px;background:#eff2f6;"></div>
<div style="left:795.5px;top:109px;width:1px;height:23px;background:#e1e5e9;"></div>
<svg style="left:697px;top:117.5px;" width="7" height="6" viewBox="0 0 7 6"><rect x="0.5" y="1.5" width="4.6" height="3.6" fill="none" stroke="#1b80d2" stroke-width="0.9"/><path d="M3.5 1.5Q5 -0.5 6.5 1.5V3.5" fill="none" stroke="#1b80d2" stroke-width="0.9"/></svg>
<span class="t" style="left:706.80px;top:115.10px;font-size:8.2px;line-height:11px;color:#1b80d2;transform:scaleX(0.8941);">Slide</span>
<svg style="left:736.2px;top:117.4px;" width="7" height="7" viewBox="0 0 7 7"><path transform="translate(2.6 3.8) scale(0.85)" d="M0 -3C0.45 -1 1 -0.45 3 0C1 0.45 0.45 1 0 3C-0.45 1 -1 0.45 -3 0C-1 -0.45 -0.45 -1 0 -3Z" fill="#444"/><path transform="translate(5.6 1.4) scale(0.4)" d="M0 -3C0.45 -1 1 -0.45 3 0C1 0.45 0.45 1 0 3C-0.45 1 -1 0.45 -3 0C-1 -0.45 -0.45 -1 0 -3Z" fill="#444"/><path transform="translate(5.8 5.6) scale(0.35)" d="M0 -3C0.45 -1 1 -0.45 3 0C1 0.45 0.45 1 0 3C-0.45 1 -1 0.45 -3 0C-1 -0.45 -0.45 -1 0 -3Z" fill="#444"/></svg>
<span class="t" style="left:745.90px;top:115.10px;font-size:8.2px;line-height:11px;color:#444;transform:scaleX(0.9748);">AI Assistant</span>
<span class="t" style="left:703.90px;top:137.10px;font-size:9.8px;line-height:14px;color:#555;transform:scaleX(0.8987);">Triggers</span>
<svg style="left:869.6600000000001px;top:143.98px;" width="4.08" height="2.244" viewBox="0 0 4.08 2.244"><path d="M0 0H4.08L2.04 2.244Z" fill="#8a8e93"/></svg>
<svg style="left:880px;top:141.2px;" width="7.8" height="7.6" viewBox="0 0 7.8 7.6"><path d="M1.9 2.4V0.9H7.3V5.6H6" fill="none" stroke="#a4aab0" stroke-width="0.8"/><rect x="1.9" y="0.5" width="5.4" height="1.1" fill="#a4aab0"/><rect x="0.5" y="2.6" width="5.4" height="4.6" fill="#f7f8fa" stroke="#a4aab0" stroke-width="0.8"/><rect x="0.5" y="2.3" width="5.4" height="1" fill="#a4aab0"/></svg>
<div style="left:703.8px;top:155.8px;width:16px;height:14.9px;background:#fff;border:1px solid #c9cdd2;box-sizing:border-box;"></div>
<svg style="left:708px;top:159px;" width="8" height="10" viewBox="0 0 8 10"><path d="M0.5 0.5H4.6L7 2.9V9H0.5Z" fill="#fff" stroke="#555" stroke-width="0.8"/><path d="M4.6 0.5V2.9H7" fill="none" stroke="#555" stroke-width="0.7"/></svg>
<div style="left:721.4px;top:155.8px;width:16px;height:14.9px;background:#f3f5f7;border:1px solid #c9cdd2;box-sizing:border-box;"></div>
<svg style="left:725.3px;top:159.2px;" width="9" height="9" viewBox="0 0 9 9"><rect x="0.5" y="1.5" width="6.5" height="7" fill="#fafafa" stroke="#b9bdc2" stroke-width="0.8"/><path d="M3 6L7.5 1L8.5 2L4 7L2.6 7.4Z" fill="#e4e6e9" stroke="#a9adb2" stroke-width="0.6"/></svg>
<div style="left:739px;top:155.8px;width:16px;height:14.9px;background:#f3f5f7;border:1px solid #c9cdd2;box-sizing:border-box;"></div>
<svg style="left:742.5px;top:159px;" width="10" height="10" viewBox="0 0 10 10"><path d="M0.5 0.5H4L5.8 2.3V7.2H0.5Z" fill="#fafafa" stroke="#a9adb2" stroke-width="0.8"/><path d="M3 2.6H6.8L8.8 4.6V9.5H3Z" fill="#fafafa" stroke="#a9adb2" stroke-width="0.8"/></svg>
<div style="left:756.6px;top:155.8px;width:16px;height:14.9px;background:#f3f5f7;border:1px solid #c9cdd2;box-sizing:border-box;"></div>
<svg style="left:760px;top:159px;" width="10" height="10" viewBox="0 0 10 10"><rect x="0.5" y="1.8" width="6" height="7.5" fill="#f0f1f3" stroke="#a9adb2" stroke-width="0.8"/><rect x="2" y="0.6" width="3" height="1.8" fill="#a9adb2"/><path d="M4 4H7.2L9 5.8V9.5H4Z" fill="#fff" stroke="#a9adb2" stroke-width="0.8"/></svg>
<div style="left:774.4px;top:155.8px;width:16px;height:14.9px;background:#f3f5f7;border:1px solid #c9cdd2;box-sizing:border-box;"></div>
<svg style="left:778.4px;top:159.3px;" width="8" height="9.4" viewBox="0 0 8 9.4"><path d="M0.5 2H7.5M2.6 2V0.7H5.4V2" fill="none" stroke="#a9adb2" stroke-width="0.8"/><path d="M1.3 2.4L1.8 8.8H6.2L6.7 2.4" fill="#fafafa" stroke="#a9adb2" stroke-width="0.8"/><path d="M3.1 3.8V7.4M4.9 3.8V7.4" stroke="#c5c8cc" stroke-width="0.6"/></svg>
<div style="left:791.8px;top:155.8px;width:16px;height:14.9px;background:#f3f5f7;border:1px solid #c9cdd2;box-sizing:border-box;"></div>
<div style="left:792.8px;top:163.4px;width:13.8px;height:0.8px;background:#d5d9dd;"></div>
<svg style="left:797.7px;top:159.3px;" width="4" height="2.6" viewBox="0 0 4 2.6"><path d="M0 2.6L2 0L4 2.6Z" fill="#a9adb2"/></svg>
<svg style="left:797.7px;top:166px;" width="4" height="2.6" viewBox="0 0 4 2.6"><path d="M0 0L2 2.6L4 0Z" fill="#a9adb2"/></svg>
<div style="left:831px;top:158px;width:10.4px;height:10.4px;background:#fff;border:1px solid #cfd3d8;box-sizing:border-box;"></div>
<svg style="left:832.6px;top:160px;" width="7.4" height="6.4" viewBox="0 0 7.4 6.4"><path d="M0.6 3.2L2.664 5.5L6.9 0.7" fill="none" stroke="#1b74d0" stroke-width="1.4"/></svg>
<span class="t" style="left:846.30px;top:159.20px;font-size:7.4px;line-height:10px;color:#444;transform:scaleX(1.0065);">Group</span>
<div style="left:846.6px;top:167.3px;width:4.4px;height:0.5px;background:#777;"></div>
<div style="left:873.4px;top:155.8px;width:16px;height:14.9px;background:#fff;border:1px solid #c9cdd2;box-sizing:border-box;"></div>
<svg style="left:876.8px;top:159.6px;" width="9" height="8.4" viewBox="0 0 9 8.4"><rect x="0.5" y="0.5" width="8" height="7.2" fill="#fff" stroke="#4a5a70" stroke-width="0.8"/><rect x="0.5" y="0.5" width="8" height="1.6" fill="#4a5a70"/></svg>
<span class="t" style="left:878.86px;top:161.90px;font-size:4px;line-height:6px;color:#2b6fd0;font-weight:bold;">(x)</span>
<div style="left:693.8px;top:179px;width:193px;height:129px;background:#fff;"></div>
<div style="left:693.8px;top:177.6px;width:193px;height:16.6px;background:#eff2f6;"></div>
<div style="left:693.8px;top:177.4px;width:205px;height:0.8px;background:#e3e6ea;"></div>
<div style="left:693.8px;top:193.8px;width:193px;height:0.8px;background:#e3e6ea;"></div>
<span class="t" style="left:698.80px;top:181.90px;font-size:7.6px;line-height:11px;color:#333;transform:scaleX(1.0403);-webkit-text-stroke:0.25px #333;">Variable Triggers</span>
<svg style="left:873.5px;top:182.2px;" width="5.6" height="8.4" viewBox="0 0 5.6 8.4"><path d="M0 0.4H5.6M0 8H5.6" stroke="#9aa0a6" stroke-width="0.7"/><path d="M0.9 1.5H4.7L2.8 3.7ZM0.9 6.9H4.7L2.8 4.7Z" fill="#a4aab0"/></svg>
<svg style="left:698.22px;top:202.56px;" width="4.56" height="2.508" viewBox="0 0 4.56 2.508"><path d="M0 0H4.56L2.28 2.508Z" fill="#8a8e93"/></svg>
<span class="t" style="left:714.40px;top:198.90px;font-size:7px;line-height:10px;color:#222;transform:scaleX(0.8742);font-weight:bold;">Val_1_2</span>
<div style="left:693.8px;top:211px;width:193px;height:0.8px;background:#eceff2;"></div>
<span class="t" style="left:713.70px;top:214.60px;font-size:7px;line-height:10px;color:#444;transform:scaleX(0.9322);">When Val_1_2</span>
<span class="t" style="left:758.33px;top:214.60px;font-size:7px;line-height:10px;color:#5f6a0c;transform:scaleX(0.9322);">changes</span>
<span class="t" style="left:716.40px;top:226.50px;font-size:7px;line-height:10px;color:#444;">− Set state of</span>
<span class="t" style="left:759.72px;top:226.50px;font-size:7px;line-height:10px;color:#1b6fb8;">Icon 1</span>
<span class="t" style="left:780.70px;top:226.50px;font-size:7px;line-height:10px;color:#444;">to</span>
<span class="t" style="left:788.48px;top:226.50px;font-size:7px;line-height:10px;color:#5b1f80;">Normal</span>
<span class="t" style="left:732.00px;top:237.20px;font-size:7px;line-height:10px;color:#444;transform:scaleX(0.9262);">If</span>
<span class="t" style="left:737.41px;top:237.20px;font-size:7px;line-height:10px;color:#8a7d00;transform:scaleX(0.9262);">Val_1_2</span>
<span class="t" style="left:763.00px;top:237.20px;font-size:7px;line-height:10px;color:#444;transform:scaleX(0.9262);">= value</span>
<span class="t" style="left:785.89px;top:237.20px;font-size:7px;line-height:10px;color:#5b1f80;">7</span>
<div style="left:693.8px;top:251.4px;width:193px;height:16.3px;background:#eff2f6;"></div>
<div style="left:693.8px;top:251.4px;width:193px;height:0.8px;background:#e3e6ea;"></div>
<div style="left:693.8px;top:267.3px;width:193px;height:0.8px;background:#e3e6ea;"></div>
<span class="t" style="left:698.80px;top:255.10px;font-size:7.6px;line-height:11px;color:#333;transform:scaleX(1.0742);-webkit-text-stroke:0.25px #333;">Object Triggers</span>
<svg style="left:873.5px;top:255.4px;" width="5.6" height="8.4" viewBox="0 0 5.6 8.4"><path d="M0 0.4H5.6M0 8H5.6" stroke="#9aa0a6" stroke-width="0.7"/><path d="M0.9 1.5H4.7L2.8 3.7ZM0.9 6.9H4.7L2.8 4.7Z" fill="#a4aab0"/></svg>
<svg style="left:698.22px;top:276.06px;" width="4.56" height="2.508" viewBox="0 0 4.56 2.508"><path d="M0 0H4.56L2.28 2.508Z" fill="#8a8e93"/></svg>
<span class="t" style="left:714.40px;top:272.40px;font-size:7px;line-height:10px;color:#222;transform:scaleX(0.9441);font-weight:bold;">Icon 1</span>
<div style="left:693.8px;top:284.6px;width:193px;height:0.8px;background:#eceff2;"></div>
<span class="t" style="left:714.40px;top:288.20px;font-size:7px;line-height:10px;color:#444;transform:scaleX(0.9708);">When the</span>
<span class="t" style="left:745.38px;top:288.20px;font-size:7px;line-height:10px;color:#5f6a0c;transform:scaleX(0.9708);">user clicks</span>
<span class="t" style="left:778.99px;top:288.20px;font-size:7px;line-height:10px;color:#1b6fb8;transform:scaleX(0.9708);">Icon 1</span>
<span class="t" style="left:716.40px;top:299.80px;font-size:7px;line-height:10px;color:#444;transform:scaleX(0.9540);">− Jump to slide</span>
<span class="t" style="left:763.36px;top:299.80px;font-size:7px;line-height:10px;color:#1b6fb8;transform:scaleX(0.9540);">1.5</span>
<span class="t" style="left:776.00px;top:299.60px;font-size:7.4px;line-height:10px;color:#1b66a8;transform:scaleX(0.8469);">ヒューマンサイエンスの教育設計</span>
<div style="left:886.7px;top:179px;width:11.8px;height:129px;background:#dde1e5;"></div>
<div style="left:886.7px;top:178.8px;width:11.8px;height:11.4px;background:#fff;border:1px solid #e3e6ea;box-sizing:border-box;"></div>
<div style="left:886.7px;top:190.2px;width:11.8px;height:46px;background:#a4a9af;"></div>
<div style="left:886.7px;top:295.4px;width:11.8px;height:12.6px;background:#fff;border:1px solid #e3e6ea;box-sizing:border-box;"></div>
<svg style="left:890.7px;top:183px;" width="3.8" height="3" viewBox="0 0 3.8 3"><path d="M0 3L1.9 0L3.8 3Z" fill="#9a9fa5"/></svg>
<svg style="left:890.7px;top:300.4px;" width="3.8" height="3" viewBox="0 0 3.8 3"><path d="M0 0L1.9 3L3.8 0Z" fill="#666"/></svg>
<div style="left:890.6px;top:212.6px;width:4px;height:0.7px;background:#d8dbdf;"></div>
<div style="left:890.6px;top:214.2px;width:4px;height:0.7px;background:#d8dbdf;"></div>
<div style="left:890.6px;top:215.79999999999998px;width:4px;height:0.7px;background:#d8dbdf;"></div>
<span class="t" style="left:703.90px;top:312.90px;font-size:9.8px;line-height:14px;color:#555;transform:scaleX(0.8919);">Slide Layers</span>
<svg style="left:869.6600000000001px;top:319.98px;" width="4.08" height="2.244" viewBox="0 0 4.08 2.244"><path d="M0 0H4.08L2.04 2.244Z" fill="#8a8e93"/></svg>
<svg style="left:880px;top:317px;" width="7.8" height="7.6" viewBox="0 0 7.8 7.6"><path d="M1.9 2.4V0.9H7.3V5.6H6" fill="none" stroke="#a4aab0" stroke-width="0.8"/><rect x="1.9" y="0.5" width="5.4" height="1.1" fill="#a4aab0"/><rect x="0.5" y="2.6" width="5.4" height="4.6" fill="#f7f8fa" stroke="#a4aab0" stroke-width="0.8"/><rect x="0.5" y="2.3" width="5.4" height="1" fill="#a4aab0"/></svg>
<div style="left:693.8px;top:332.8px;width:193px;height:96.8px;background:#fff;"></div>
<svg style="left:703.8px;top:336.0px;" width="18" height="9.4" viewBox="0 0 18 9.4"><rect x="0" y="0" width="18" height="9.4" fill="#e9ebee"/><rect x="0" y="0" width="3" height="9.4" fill="#39476a"/><rect x="15" y="0" width="3" height="9.4" fill="#39476a"/><rect x="1" y="1.5" width="1" height="6.4" fill="#7f8cae"/><rect x="16" y="1.5" width="1" height="6.4" fill="#7f8cae"/><rect x="6.5" y="1.5" width="5" height="1" fill="#6a8fc8"/><rect x="5" y="4" width="8" height="0.8" fill="#9aa0a8"/><rect x="5" y="6" width="8" height="0.8" fill="#9aa0a8"/><rect x="3" y="7.8" width="12" height="1" fill="#b7bcc4"/></svg>
<span class="t" style="left:730.00px;top:336.30px;font-size:7px;line-height:10px;color:#555;transform:scaleX(0.9778);">02-5</span>
<svg style="left:703.8px;top:355.0px;" width="18" height="9.4" viewBox="0 0 18 9.4"><rect x="0" y="0" width="18" height="9.4" fill="#e9ebee"/><rect x="0" y="0" width="3" height="9.4" fill="#39476a"/><rect x="15" y="0" width="3" height="9.4" fill="#39476a"/><rect x="1" y="1.5" width="1" height="6.4" fill="#7f8cae"/><rect x="16" y="1.5" width="1" height="6.4" fill="#7f8cae"/><rect x="6.5" y="1.5" width="5" height="1" fill="#6a8fc8"/><rect x="5" y="4" width="8" height="0.8" fill="#9aa0a8"/><rect x="5" y="6" width="8" height="0.8" fill="#9aa0a8"/><rect x="3" y="7.8" width="12" height="1" fill="#b7bcc4"/></svg>
<span class="t" style="left:730.00px;top:355.30px;font-size:7px;line-height:10px;color:#555;transform:scaleX(0.9778);">02-4</span>
<svg style="left:703.8px;top:373.59999999999997px;" width="18" height="9.4" viewBox="0 0 18 9.4"><rect x="0" y="0" width="18" height="9.4" fill="#e9ebee"/><rect x="0" y="0" width="3" height="9.4" fill="#39476a"/><rect x="15" y="0" width="3" height="9.4" fill="#39476a"/><rect x="1" y="1.5" width="1" height="6.4" fill="#7f8cae"/><rect x="16" y="1.5" width="1" height="6.4" fill="#7f8cae"/><rect x="6.5" y="1.5" width="5" height="1" fill="#6a8fc8"/><rect x="5" y="4" width="8" height="0.8" fill="#9aa0a8"/><rect x="5" y="6" width="8" height="0.8" fill="#9aa0a8"/><rect x="3" y="7.8" width="12" height="1" fill="#b7bcc4"/></svg>
<span class="t" style="left:730.00px;top:373.90px;font-size:7px;line-height:10px;color:#555;transform:scaleX(0.9778);">02-3</span>
<svg style="left:703.8px;top:392.59999999999997px;" width="18" height="9.4" viewBox="0 0 18 9.4"><rect x="0" y="0" width="18" height="9.4" fill="#e9ebee"/><rect x="0" y="0" width="3" height="9.4" fill="#39476a"/><rect x="15" y="0" width="3" height="9.4" fill="#39476a"/><rect x="1" y="1.5" width="1" height="6.4" fill="#7f8cae"/><rect x="16" y="1.5" width="1" height="6.4" fill="#7f8cae"/><rect x="6.5" y="1.5" width="5" height="1" fill="#6a8fc8"/><rect x="5" y="4" width="8" height="0.8" fill="#9aa0a8"/><rect x="5" y="6" width="8" height="0.8" fill="#9aa0a8"/><rect x="3" y="7.8" width="12" height="1" fill="#b7bcc4"/></svg>
<span class="t" style="left:730.00px;top:392.90px;font-size:7px;line-height:10px;color:#555;transform:scaleX(0.9778);">02-2</span>
<svg style="left:703.8px;top:411.2px;" width="18" height="9.4" viewBox="0 0 18 9.4"><rect x="0" y="0" width="18" height="9.4" fill="#e9ebee"/><rect x="0" y="0" width="3" height="9.4" fill="#39476a"/><rect x="15" y="0" width="3" height="9.4" fill="#39476a"/><rect x="1" y="1.5" width="1" height="6.4" fill="#7f8cae"/><rect x="16" y="1.5" width="1" height="6.4" fill="#7f8cae"/><rect x="6.5" y="1.5" width="5" height="1" fill="#6a8fc8"/><rect x="5" y="4" width="8" height="0.8" fill="#9aa0a8"/><rect x="5" y="6" width="8" height="0.8" fill="#9aa0a8"/><rect x="3" y="7.8" width="12" height="1" fill="#b7bcc4"/></svg>
<span class="t" style="left:730.00px;top:411.50px;font-size:7px;line-height:10px;color:#555;transform:scaleX(0.9778);">02-1</span>
<div style="left:887.3px;top:332.8px;width:11.2px;height:96.8px;background:#dde1e5;"></div>
<div style="left:887.3px;top:333.5px;width:11.2px;height:11.2px;background:#fff;border:1px solid #e3e6ea;box-sizing:border-box;"></div>
<div style="left:887.3px;top:344.7px;width:11.2px;height:46.5px;background:#a4a9af;"></div>
<div style="left:887.3px;top:415.4px;width:11.2px;height:13px;background:#fff;border:1px solid #e3e6ea;box-sizing:border-box;"></div>
<svg style="left:891px;top:337.8px;" width="3.8" height="3" viewBox="0 0 3.8 3"><path d="M0 3L1.9 0L3.8 3Z" fill="#9a9fa5"/></svg>
<svg style="left:891px;top:420.6px;" width="3.8" height="3" viewBox="0 0 3.8 3"><path d="M0 0L1.9 3L3.8 0Z" fill="#666"/></svg>
<div style="left:890.9px;top:366.4px;width:4px;height:0.7px;background:#d8dbdf;"></div>
<div style="left:890.9px;top:368.0px;width:4px;height:0.7px;background:#d8dbdf;"></div>
<div style="left:890.9px;top:369.59999999999997px;width:4px;height:0.7px;background:#d8dbdf;"></div>
<div style="left:703.8px;top:436.6px;width:16px;height:16px;background:#fff;border:1px solid #c9cdd2;box-sizing:border-box;"></div>
<svg style="left:708px;top:440px;" width="8" height="10" viewBox="0 0 8 10"><path d="M0.5 0.5H4.6L7 2.9V9H0.5Z" fill="#fff" stroke="#555" stroke-width="0.8"/><path d="M4.6 0.5V2.9H7" fill="none" stroke="#555" stroke-width="0.7"/></svg>
<div style="left:721.6px;top:436.6px;width:16px;height:16px;background:#fff;border:1px solid #c9cdd2;box-sizing:border-box;"></div>
<svg style="left:725px;top:439.6px;" width="10" height="10" viewBox="0 0 10 10"><path d="M3 0.8H9.2V7.2H3Z" fill="#e8f2e8" stroke="#555" stroke-width="0.8"/><path d="M0.6 2.8H6.8V9.4H0.6Z" fill="#fff" stroke="#555" stroke-width="0.8"/><rect x="1.6" y="4.2" width="4.2" height="4.2" fill="#3d9a4a"/></svg>
<div style="left:739.5px;top:436.6px;width:16.4px;height:16px;background:#f3f5f7;border:1px solid #c9cdd2;box-sizing:border-box;"></div>
<svg style="left:743.7px;top:440px;" width="8" height="9.4" viewBox="0 0 8 9.4"><path d="M0.5 2H7.5M2.6 2V0.7H5.4V2" fill="none" stroke="#a9adb2" stroke-width="0.8"/><path d="M1.3 2.4L1.8 8.8H6.2L6.7 2.4" fill="#fafafa" stroke="#a9adb2" stroke-width="0.8"/><path d="M3.1 3.8V7.4M4.9 3.8V7.4" stroke="#c5c8cc" stroke-width="0.6"/></svg>
<div style="left:761.5px;top:440.5px;width:9.8px;height:9.8px;background:#fff;border:1px solid #cfd3d8;box-sizing:border-box;"></div>
<svg style="left:763.1px;top:442.5px;" width="6.800000000000001" height="5.800000000000001" viewBox="0 0 6.800000000000001 5.800000000000001"><path d="M0.6 2.9000000000000004L2.448 4.9L6.300000000000001 0.7" fill="none" stroke="#1b74d0" stroke-width="1.4"/></svg>
<span class="t" style="left:776.30px;top:440.30px;font-size:8px;line-height:11px;color:#444;transform:scaleX(0.9776);">Dim</span>
<div style="left:878px;top:436.6px;width:16px;height:16px;background:#fff;border:1px solid #c9cdd2;box-sizing:border-box;"></div>
<svg style="left:881.8px;top:440.40000000000003px;" width="8.4" height="8.4" viewBox="0 0 8.4 8.4"><g transform="translate(4.2 4.2)"><rect x="-0.75" y="-3.7" width="1.5" height="1.85" transform="rotate(0)" fill="#6a6e73"/><rect x="-0.75" y="-3.7" width="1.5" height="1.85" transform="rotate(45)" fill="#6a6e73"/><rect x="-0.75" y="-3.7" width="1.5" height="1.85" transform="rotate(90)" fill="#6a6e73"/><rect x="-0.75" y="-3.7" width="1.5" height="1.85" transform="rotate(135)" fill="#6a6e73"/><rect x="-0.75" y="-3.7" width="1.5" height="1.85" transform="rotate(180)" fill="#6a6e73"/><rect x="-0.75" y="-3.7" width="1.5" height="1.85" transform="rotate(225)" fill="#6a6e73"/><rect x="-0.75" y="-3.7" width="1.5" height="1.85" transform="rotate(270)" fill="#6a6e73"/><rect x="-0.75" y="-3.7" width="1.5" height="1.85" transform="rotate(315)" fill="#6a6e73"/><circle r="2.664" fill="#6a6e73"/><circle r="1.4800000000000002" fill="#fff"/></g></svg>
<svg style="left:749.2px;top:464px;" width="7.4" height="6.4" viewBox="0 0 7.4 6.4"><rect x="0" y="0" width="3.1" height="2.6" fill="#ececee"/><rect x="4.2" y="0" width="3.1" height="2.6" fill="#ececee"/><rect x="0" y="3.7" width="3.1" height="2.6" fill="#ececee"/><rect x="4.2" y="3.7" width="3.1" height="2.6" fill="#ececee"/></svg>
<div style="left:761px;top:459.4px;width:12.8px;height:13.8px;background:#46434a;"></div>
<svg style="left:764px;top:464px;" width="6.8" height="6.2" viewBox="0 0 6.8 6.2"><rect x="0.4" y="0.4" width="6" height="5.4" fill="none" stroke="#ececee" stroke-width="0.8"/><rect x="0.8" y="0.8" width="2.6" height="2.4" fill="#ececee"/><path d="M3.6 0.4V5.8" stroke="#ececee" stroke-width="0.6"/></svg>
<svg style="left:778.6px;top:463.5px;" width="6.6" height="7" viewBox="0 0 6.6 7"><path d="M0 0.6H6.6" stroke="#d5d5d8" stroke-width="1"/><path d="M1 1.2V4.4H5.6V1.2" fill="none" stroke="#d5d5d8" stroke-width="0.8"/><path d="M3.3 4.4V6M1.8 6.5H4.8" stroke="#d5d5d8" stroke-width="0.8"/></svg>
<span class="t" style="left:791.00px;top:462.80px;font-size:7.4px;line-height:10px;color:#a6acbc;transform:scaleX(0.8170);">66%</span>
<div style="left:809.7px;top:467.5px;width:4px;height:0.9px;background:#ececee;"></div>
<div style="left:816.8px;top:467.5px;width:58.3px;height:0.8px;background:#cfcfd2;"></div>
<div style="left:845.9px;top:465.6px;width:0.9px;height:4.6px;background:#d5d5d8;"></div>
<svg style="left:833px;top:465.3px;" width="5.2" height="5.2" viewBox="0 0 5.2 5.2"><circle cx="2.6" cy="2.6" r="2" fill="#37343a" stroke="#ececee" stroke-width="0.9"/></svg>
<svg style="left:878px;top:465.6px;" width="4.8" height="4.8" viewBox="0 0 4.8 4.8"><path d="M0 2.4H4.8M2.4 0V4.8" stroke="#ececee" stroke-width="0.9"/></svg>
<svg style="left:887.2px;top:463.2px;" width="8.4" height="8.4" viewBox="0 0 8.4 8.4"><rect x="0.4" y="0.4" width="7.6" height="7.6" fill="none" stroke="#ececee" stroke-width="0.8"/><path d="M2 3.4V2H3.4M6.4 5V6.4H5M5 2H6.4V3.4M2 5V6.4H3.4" fill="none" stroke="#ececee" stroke-width="0.8"/><path d="M2.2 2.2L3.4 3.4M6.2 2.2L5 3.4M2.2 6.2L3.4 5M6.2 6.2L5 5" stroke="#ececee" stroke-width="0.6"/></svg>
<svg style="left:305.4px;top:153.2px;" width="12" height="2" viewBox="0 0 12 2"><path d="M0 1L0.75 0.2L2.25 1.8L3.75 0.2L5.25 1.8L6.75 0.2L8.25 1.8L9.75 0.2L11.25 1.8" fill="none" stroke="#c8506a" stroke-width="0.6"/></svg>
<svg style="left:400.2px;top:169.6px;" width="6.6" height="2" viewBox="0 0 6.6 2"><path d="M0 1L0.75 0.2L2.25 1.8L3.75 0.2L5.25 1.8" fill="none" stroke="#c8506a" stroke-width="0.6"/></svg>
<svg style="left:413.8px;top:169.6px;" width="5.6" height="2" viewBox="0 0 5.6 2"><path d="M0 1L0.75 0.2L2.25 1.8L3.75 0.2" fill="none" stroke="#c8506a" stroke-width="0.6"/></svg>
</body></html>
